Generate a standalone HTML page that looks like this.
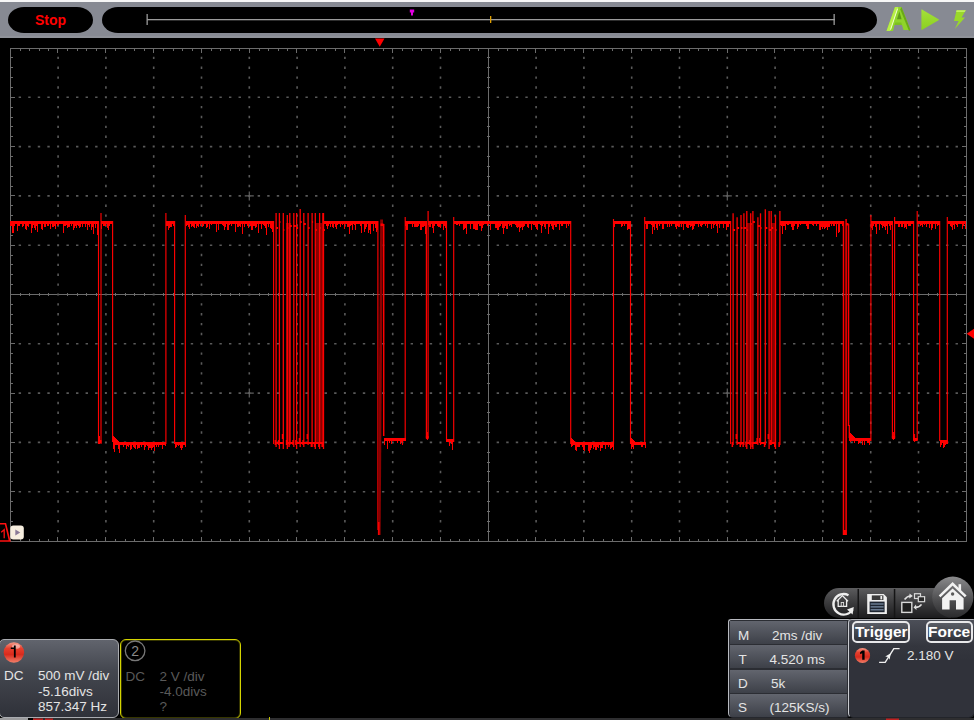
<!DOCTYPE html>
<html><head><meta charset="utf-8">
<style>
html,body{margin:0;padding:0;background:#000;width:974px;height:720px;overflow:hidden;font-family:"Liberation Sans",sans-serif;}
.abs{position:absolute;}
#topwhite{left:0;top:0;width:974px;height:2px;background:#f7f7f7;}
#topbar{left:0;top:2px;width:974px;height:36px;background:#878a93;border-bottom:0;box-shadow:inset 0 -2px 0 #8f9299;}
#stop{left:8px;top:7px;width:85px;height:26px;background:#000;border-radius:16px/13px;}
#stoptxt{left:35px;top:11px;font-weight:bold;font-size:14px;color:#ff0000;line-height:18px;}
#tpill{left:102px;top:7px;width:775px;height:26px;background:#000;border-radius:16px/13px;}
svg{position:absolute;left:0;top:0;}
.p1{left:-1px;top:639px;width:118px;height:77px;border:1px solid #a9abb0;border-radius:5px 6px 6px 5px;
 background:linear-gradient(#61646d 0%,#44474f 40%,#2f3139 100%);}
.p2{left:120px;top:639px;width:119px;height:78px;border:1px solid #d4d400;border-radius:6px;background:#000;box-shadow:inset 0 0 0 1px rgba(120,120,0,0.45);}
.t{position:absolute;font-size:13.5px;line-height:15px;white-space:nowrap;}
.w{color:#e4e4e4;}
.gr{color:#5a5a5a;}
.tb{left:728px;top:619px;width:121px;height:97px;border:1px solid #b8bac0;border-bottom:1px solid #26282e;border-right:1px solid #1e2026;border-radius:3px 3px 5px 5px;background:#2b2d33;}
.row{position:absolute;left:1px;width:117px;height:23px;background:linear-gradient(#62656e,#3d4048);}
.trig{left:848px;top:619px;width:125px;height:97px;border-left:1px solid #c9cbd0;border-top:1px solid #b0b2b8;border-right:1px solid #22242a;border-bottom:1px solid #22242a;border-radius:4px 2px 6px 5px;background:linear-gradient(#4c4f58 0px,#34363e 26px,#30323a 40px);}
.btn{position:absolute;top:1px;height:18px;border:2px solid #e8e8ea;border-radius:5px;background:linear-gradient(#5a5d66,#2e3038);}
.btxt{position:absolute;font-weight:bold;font-size:15.5px;color:#ffffff;line-height:17px;}
#toolpill{left:824px;top:588px;width:130px;height:30px;border-radius:15px;background:linear-gradient(#5a5c60,#2a2b2e);}
#home{left:932px;top:576px;width:42px;height:42px;border-radius:21px;background:radial-gradient(circle at 50% 35%,#6e6f73,#3a3b3e 75%);}
</style></head><body>
<div id="topwhite" class="abs"></div>
<div id="topbar" class="abs"></div>
<div id="stop" class="abs"></div>
<div id="stoptxt" class="abs">Stop</div>
<div id="tpill" class="abs"></div>

<svg width="974" height="720" viewBox="0 0 974 720" shape-rendering="crispEdges">
<rect x="10" y="48" width="957" height="1" fill="#6c6c6c"/>
<rect x="10" y="541" width="957" height="1" fill="#6c6c6c"/>
<rect x="10" y="48" width="1" height="494" fill="#6c6c6c"/>
<rect x="966" y="48" width="1" height="494" fill="#6c6c6c"/>
<rect x="10" y="294" width="957" height="1" fill="#6c6c6c"/>
<rect x="488" y="48" width="1" height="494" fill="#6c6c6c"/>
<rect x="20" y="49" width="1" height="2" fill="#6c6c6c"/>
<rect x="20" y="539" width="1" height="2" fill="#6c6c6c"/>
<rect x="20" y="293" width="1" height="3" fill="#6c6c6c"/>
<rect x="29" y="49" width="1" height="2" fill="#6c6c6c"/>
<rect x="29" y="539" width="1" height="2" fill="#6c6c6c"/>
<rect x="29" y="293" width="1" height="3" fill="#6c6c6c"/>
<rect x="39" y="49" width="1" height="2" fill="#6c6c6c"/>
<rect x="39" y="539" width="1" height="2" fill="#6c6c6c"/>
<rect x="39" y="293" width="1" height="3" fill="#6c6c6c"/>
<rect x="48" y="49" width="1" height="2" fill="#6c6c6c"/>
<rect x="48" y="539" width="1" height="2" fill="#6c6c6c"/>
<rect x="48" y="293" width="1" height="3" fill="#6c6c6c"/>
<rect x="67" y="49" width="1" height="2" fill="#6c6c6c"/>
<rect x="67" y="539" width="1" height="2" fill="#6c6c6c"/>
<rect x="67" y="293" width="1" height="3" fill="#6c6c6c"/>
<rect x="77" y="49" width="1" height="2" fill="#6c6c6c"/>
<rect x="77" y="539" width="1" height="2" fill="#6c6c6c"/>
<rect x="77" y="293" width="1" height="3" fill="#6c6c6c"/>
<rect x="86" y="49" width="1" height="2" fill="#6c6c6c"/>
<rect x="86" y="539" width="1" height="2" fill="#6c6c6c"/>
<rect x="86" y="293" width="1" height="3" fill="#6c6c6c"/>
<rect x="96" y="49" width="1" height="2" fill="#6c6c6c"/>
<rect x="96" y="539" width="1" height="2" fill="#6c6c6c"/>
<rect x="96" y="293" width="1" height="3" fill="#6c6c6c"/>
<rect x="115" y="49" width="1" height="2" fill="#6c6c6c"/>
<rect x="115" y="539" width="1" height="2" fill="#6c6c6c"/>
<rect x="115" y="293" width="1" height="3" fill="#6c6c6c"/>
<rect x="125" y="49" width="1" height="2" fill="#6c6c6c"/>
<rect x="125" y="539" width="1" height="2" fill="#6c6c6c"/>
<rect x="125" y="293" width="1" height="3" fill="#6c6c6c"/>
<rect x="134" y="49" width="1" height="2" fill="#6c6c6c"/>
<rect x="134" y="539" width="1" height="2" fill="#6c6c6c"/>
<rect x="134" y="293" width="1" height="3" fill="#6c6c6c"/>
<rect x="144" y="49" width="1" height="2" fill="#6c6c6c"/>
<rect x="144" y="539" width="1" height="2" fill="#6c6c6c"/>
<rect x="144" y="293" width="1" height="3" fill="#6c6c6c"/>
<rect x="163" y="49" width="1" height="2" fill="#6c6c6c"/>
<rect x="163" y="539" width="1" height="2" fill="#6c6c6c"/>
<rect x="163" y="293" width="1" height="3" fill="#6c6c6c"/>
<rect x="173" y="49" width="1" height="2" fill="#6c6c6c"/>
<rect x="173" y="539" width="1" height="2" fill="#6c6c6c"/>
<rect x="173" y="293" width="1" height="3" fill="#6c6c6c"/>
<rect x="182" y="49" width="1" height="2" fill="#6c6c6c"/>
<rect x="182" y="539" width="1" height="2" fill="#6c6c6c"/>
<rect x="182" y="293" width="1" height="3" fill="#6c6c6c"/>
<rect x="192" y="49" width="1" height="2" fill="#6c6c6c"/>
<rect x="192" y="539" width="1" height="2" fill="#6c6c6c"/>
<rect x="192" y="293" width="1" height="3" fill="#6c6c6c"/>
<rect x="211" y="49" width="1" height="2" fill="#6c6c6c"/>
<rect x="211" y="539" width="1" height="2" fill="#6c6c6c"/>
<rect x="211" y="293" width="1" height="3" fill="#6c6c6c"/>
<rect x="220" y="49" width="1" height="2" fill="#6c6c6c"/>
<rect x="220" y="539" width="1" height="2" fill="#6c6c6c"/>
<rect x="220" y="293" width="1" height="3" fill="#6c6c6c"/>
<rect x="230" y="49" width="1" height="2" fill="#6c6c6c"/>
<rect x="230" y="539" width="1" height="2" fill="#6c6c6c"/>
<rect x="230" y="293" width="1" height="3" fill="#6c6c6c"/>
<rect x="239" y="49" width="1" height="2" fill="#6c6c6c"/>
<rect x="239" y="539" width="1" height="2" fill="#6c6c6c"/>
<rect x="239" y="293" width="1" height="3" fill="#6c6c6c"/>
<rect x="259" y="49" width="1" height="2" fill="#6c6c6c"/>
<rect x="259" y="539" width="1" height="2" fill="#6c6c6c"/>
<rect x="259" y="293" width="1" height="3" fill="#6c6c6c"/>
<rect x="268" y="49" width="1" height="2" fill="#6c6c6c"/>
<rect x="268" y="539" width="1" height="2" fill="#6c6c6c"/>
<rect x="268" y="293" width="1" height="3" fill="#6c6c6c"/>
<rect x="278" y="49" width="1" height="2" fill="#6c6c6c"/>
<rect x="278" y="539" width="1" height="2" fill="#6c6c6c"/>
<rect x="278" y="293" width="1" height="3" fill="#6c6c6c"/>
<rect x="287" y="49" width="1" height="2" fill="#6c6c6c"/>
<rect x="287" y="539" width="1" height="2" fill="#6c6c6c"/>
<rect x="287" y="293" width="1" height="3" fill="#6c6c6c"/>
<rect x="306" y="49" width="1" height="2" fill="#6c6c6c"/>
<rect x="306" y="539" width="1" height="2" fill="#6c6c6c"/>
<rect x="306" y="293" width="1" height="3" fill="#6c6c6c"/>
<rect x="316" y="49" width="1" height="2" fill="#6c6c6c"/>
<rect x="316" y="539" width="1" height="2" fill="#6c6c6c"/>
<rect x="316" y="293" width="1" height="3" fill="#6c6c6c"/>
<rect x="325" y="49" width="1" height="2" fill="#6c6c6c"/>
<rect x="325" y="539" width="1" height="2" fill="#6c6c6c"/>
<rect x="325" y="293" width="1" height="3" fill="#6c6c6c"/>
<rect x="335" y="49" width="1" height="2" fill="#6c6c6c"/>
<rect x="335" y="539" width="1" height="2" fill="#6c6c6c"/>
<rect x="335" y="293" width="1" height="3" fill="#6c6c6c"/>
<rect x="354" y="49" width="1" height="2" fill="#6c6c6c"/>
<rect x="354" y="539" width="1" height="2" fill="#6c6c6c"/>
<rect x="354" y="293" width="1" height="3" fill="#6c6c6c"/>
<rect x="364" y="49" width="1" height="2" fill="#6c6c6c"/>
<rect x="364" y="539" width="1" height="2" fill="#6c6c6c"/>
<rect x="364" y="293" width="1" height="3" fill="#6c6c6c"/>
<rect x="373" y="49" width="1" height="2" fill="#6c6c6c"/>
<rect x="373" y="539" width="1" height="2" fill="#6c6c6c"/>
<rect x="373" y="293" width="1" height="3" fill="#6c6c6c"/>
<rect x="383" y="49" width="1" height="2" fill="#6c6c6c"/>
<rect x="383" y="539" width="1" height="2" fill="#6c6c6c"/>
<rect x="383" y="293" width="1" height="3" fill="#6c6c6c"/>
<rect x="402" y="49" width="1" height="2" fill="#6c6c6c"/>
<rect x="402" y="539" width="1" height="2" fill="#6c6c6c"/>
<rect x="402" y="293" width="1" height="3" fill="#6c6c6c"/>
<rect x="412" y="49" width="1" height="2" fill="#6c6c6c"/>
<rect x="412" y="539" width="1" height="2" fill="#6c6c6c"/>
<rect x="412" y="293" width="1" height="3" fill="#6c6c6c"/>
<rect x="421" y="49" width="1" height="2" fill="#6c6c6c"/>
<rect x="421" y="539" width="1" height="2" fill="#6c6c6c"/>
<rect x="421" y="293" width="1" height="3" fill="#6c6c6c"/>
<rect x="431" y="49" width="1" height="2" fill="#6c6c6c"/>
<rect x="431" y="539" width="1" height="2" fill="#6c6c6c"/>
<rect x="431" y="293" width="1" height="3" fill="#6c6c6c"/>
<rect x="450" y="49" width="1" height="2" fill="#6c6c6c"/>
<rect x="450" y="539" width="1" height="2" fill="#6c6c6c"/>
<rect x="450" y="293" width="1" height="3" fill="#6c6c6c"/>
<rect x="459" y="49" width="1" height="2" fill="#6c6c6c"/>
<rect x="459" y="539" width="1" height="2" fill="#6c6c6c"/>
<rect x="459" y="293" width="1" height="3" fill="#6c6c6c"/>
<rect x="469" y="49" width="1" height="2" fill="#6c6c6c"/>
<rect x="469" y="539" width="1" height="2" fill="#6c6c6c"/>
<rect x="469" y="293" width="1" height="3" fill="#6c6c6c"/>
<rect x="478" y="49" width="1" height="2" fill="#6c6c6c"/>
<rect x="478" y="539" width="1" height="2" fill="#6c6c6c"/>
<rect x="478" y="293" width="1" height="3" fill="#6c6c6c"/>
<rect x="498" y="49" width="1" height="2" fill="#6c6c6c"/>
<rect x="498" y="539" width="1" height="2" fill="#6c6c6c"/>
<rect x="498" y="293" width="1" height="3" fill="#6c6c6c"/>
<rect x="507" y="49" width="1" height="2" fill="#6c6c6c"/>
<rect x="507" y="539" width="1" height="2" fill="#6c6c6c"/>
<rect x="507" y="293" width="1" height="3" fill="#6c6c6c"/>
<rect x="517" y="49" width="1" height="2" fill="#6c6c6c"/>
<rect x="517" y="539" width="1" height="2" fill="#6c6c6c"/>
<rect x="517" y="293" width="1" height="3" fill="#6c6c6c"/>
<rect x="526" y="49" width="1" height="2" fill="#6c6c6c"/>
<rect x="526" y="539" width="1" height="2" fill="#6c6c6c"/>
<rect x="526" y="293" width="1" height="3" fill="#6c6c6c"/>
<rect x="545" y="49" width="1" height="2" fill="#6c6c6c"/>
<rect x="545" y="539" width="1" height="2" fill="#6c6c6c"/>
<rect x="545" y="293" width="1" height="3" fill="#6c6c6c"/>
<rect x="555" y="49" width="1" height="2" fill="#6c6c6c"/>
<rect x="555" y="539" width="1" height="2" fill="#6c6c6c"/>
<rect x="555" y="293" width="1" height="3" fill="#6c6c6c"/>
<rect x="564" y="49" width="1" height="2" fill="#6c6c6c"/>
<rect x="564" y="539" width="1" height="2" fill="#6c6c6c"/>
<rect x="564" y="293" width="1" height="3" fill="#6c6c6c"/>
<rect x="574" y="49" width="1" height="2" fill="#6c6c6c"/>
<rect x="574" y="539" width="1" height="2" fill="#6c6c6c"/>
<rect x="574" y="293" width="1" height="3" fill="#6c6c6c"/>
<rect x="593" y="49" width="1" height="2" fill="#6c6c6c"/>
<rect x="593" y="539" width="1" height="2" fill="#6c6c6c"/>
<rect x="593" y="293" width="1" height="3" fill="#6c6c6c"/>
<rect x="603" y="49" width="1" height="2" fill="#6c6c6c"/>
<rect x="603" y="539" width="1" height="2" fill="#6c6c6c"/>
<rect x="603" y="293" width="1" height="3" fill="#6c6c6c"/>
<rect x="612" y="49" width="1" height="2" fill="#6c6c6c"/>
<rect x="612" y="539" width="1" height="2" fill="#6c6c6c"/>
<rect x="612" y="293" width="1" height="3" fill="#6c6c6c"/>
<rect x="622" y="49" width="1" height="2" fill="#6c6c6c"/>
<rect x="622" y="539" width="1" height="2" fill="#6c6c6c"/>
<rect x="622" y="293" width="1" height="3" fill="#6c6c6c"/>
<rect x="641" y="49" width="1" height="2" fill="#6c6c6c"/>
<rect x="641" y="539" width="1" height="2" fill="#6c6c6c"/>
<rect x="641" y="293" width="1" height="3" fill="#6c6c6c"/>
<rect x="651" y="49" width="1" height="2" fill="#6c6c6c"/>
<rect x="651" y="539" width="1" height="2" fill="#6c6c6c"/>
<rect x="651" y="293" width="1" height="3" fill="#6c6c6c"/>
<rect x="660" y="49" width="1" height="2" fill="#6c6c6c"/>
<rect x="660" y="539" width="1" height="2" fill="#6c6c6c"/>
<rect x="660" y="293" width="1" height="3" fill="#6c6c6c"/>
<rect x="670" y="49" width="1" height="2" fill="#6c6c6c"/>
<rect x="670" y="539" width="1" height="2" fill="#6c6c6c"/>
<rect x="670" y="293" width="1" height="3" fill="#6c6c6c"/>
<rect x="689" y="49" width="1" height="2" fill="#6c6c6c"/>
<rect x="689" y="539" width="1" height="2" fill="#6c6c6c"/>
<rect x="689" y="293" width="1" height="3" fill="#6c6c6c"/>
<rect x="698" y="49" width="1" height="2" fill="#6c6c6c"/>
<rect x="698" y="539" width="1" height="2" fill="#6c6c6c"/>
<rect x="698" y="293" width="1" height="3" fill="#6c6c6c"/>
<rect x="708" y="49" width="1" height="2" fill="#6c6c6c"/>
<rect x="708" y="539" width="1" height="2" fill="#6c6c6c"/>
<rect x="708" y="293" width="1" height="3" fill="#6c6c6c"/>
<rect x="717" y="49" width="1" height="2" fill="#6c6c6c"/>
<rect x="717" y="539" width="1" height="2" fill="#6c6c6c"/>
<rect x="717" y="293" width="1" height="3" fill="#6c6c6c"/>
<rect x="737" y="49" width="1" height="2" fill="#6c6c6c"/>
<rect x="737" y="539" width="1" height="2" fill="#6c6c6c"/>
<rect x="737" y="293" width="1" height="3" fill="#6c6c6c"/>
<rect x="746" y="49" width="1" height="2" fill="#6c6c6c"/>
<rect x="746" y="539" width="1" height="2" fill="#6c6c6c"/>
<rect x="746" y="293" width="1" height="3" fill="#6c6c6c"/>
<rect x="756" y="49" width="1" height="2" fill="#6c6c6c"/>
<rect x="756" y="539" width="1" height="2" fill="#6c6c6c"/>
<rect x="756" y="293" width="1" height="3" fill="#6c6c6c"/>
<rect x="765" y="49" width="1" height="2" fill="#6c6c6c"/>
<rect x="765" y="539" width="1" height="2" fill="#6c6c6c"/>
<rect x="765" y="293" width="1" height="3" fill="#6c6c6c"/>
<rect x="784" y="49" width="1" height="2" fill="#6c6c6c"/>
<rect x="784" y="539" width="1" height="2" fill="#6c6c6c"/>
<rect x="784" y="293" width="1" height="3" fill="#6c6c6c"/>
<rect x="794" y="49" width="1" height="2" fill="#6c6c6c"/>
<rect x="794" y="539" width="1" height="2" fill="#6c6c6c"/>
<rect x="794" y="293" width="1" height="3" fill="#6c6c6c"/>
<rect x="803" y="49" width="1" height="2" fill="#6c6c6c"/>
<rect x="803" y="539" width="1" height="2" fill="#6c6c6c"/>
<rect x="803" y="293" width="1" height="3" fill="#6c6c6c"/>
<rect x="813" y="49" width="1" height="2" fill="#6c6c6c"/>
<rect x="813" y="539" width="1" height="2" fill="#6c6c6c"/>
<rect x="813" y="293" width="1" height="3" fill="#6c6c6c"/>
<rect x="832" y="49" width="1" height="2" fill="#6c6c6c"/>
<rect x="832" y="539" width="1" height="2" fill="#6c6c6c"/>
<rect x="832" y="293" width="1" height="3" fill="#6c6c6c"/>
<rect x="842" y="49" width="1" height="2" fill="#6c6c6c"/>
<rect x="842" y="539" width="1" height="2" fill="#6c6c6c"/>
<rect x="842" y="293" width="1" height="3" fill="#6c6c6c"/>
<rect x="851" y="49" width="1" height="2" fill="#6c6c6c"/>
<rect x="851" y="539" width="1" height="2" fill="#6c6c6c"/>
<rect x="851" y="293" width="1" height="3" fill="#6c6c6c"/>
<rect x="861" y="49" width="1" height="2" fill="#6c6c6c"/>
<rect x="861" y="539" width="1" height="2" fill="#6c6c6c"/>
<rect x="861" y="293" width="1" height="3" fill="#6c6c6c"/>
<rect x="880" y="49" width="1" height="2" fill="#6c6c6c"/>
<rect x="880" y="539" width="1" height="2" fill="#6c6c6c"/>
<rect x="880" y="293" width="1" height="3" fill="#6c6c6c"/>
<rect x="890" y="49" width="1" height="2" fill="#6c6c6c"/>
<rect x="890" y="539" width="1" height="2" fill="#6c6c6c"/>
<rect x="890" y="293" width="1" height="3" fill="#6c6c6c"/>
<rect x="899" y="49" width="1" height="2" fill="#6c6c6c"/>
<rect x="899" y="539" width="1" height="2" fill="#6c6c6c"/>
<rect x="899" y="293" width="1" height="3" fill="#6c6c6c"/>
<rect x="909" y="49" width="1" height="2" fill="#6c6c6c"/>
<rect x="909" y="539" width="1" height="2" fill="#6c6c6c"/>
<rect x="909" y="293" width="1" height="3" fill="#6c6c6c"/>
<rect x="928" y="49" width="1" height="2" fill="#6c6c6c"/>
<rect x="928" y="539" width="1" height="2" fill="#6c6c6c"/>
<rect x="928" y="293" width="1" height="3" fill="#6c6c6c"/>
<rect x="937" y="49" width="1" height="2" fill="#6c6c6c"/>
<rect x="937" y="539" width="1" height="2" fill="#6c6c6c"/>
<rect x="937" y="293" width="1" height="3" fill="#6c6c6c"/>
<rect x="947" y="49" width="1" height="2" fill="#6c6c6c"/>
<rect x="947" y="539" width="1" height="2" fill="#6c6c6c"/>
<rect x="947" y="293" width="1" height="3" fill="#6c6c6c"/>
<rect x="956" y="49" width="1" height="2" fill="#6c6c6c"/>
<rect x="956" y="539" width="1" height="2" fill="#6c6c6c"/>
<rect x="956" y="293" width="1" height="3" fill="#6c6c6c"/>
<rect x="11" y="57" width="2" height="1" fill="#6c6c6c"/>
<rect x="964" y="57" width="2" height="1" fill="#6c6c6c"/>
<rect x="487" y="57" width="3" height="1" fill="#6c6c6c"/>
<rect x="11" y="67" width="2" height="1" fill="#6c6c6c"/>
<rect x="964" y="67" width="2" height="1" fill="#6c6c6c"/>
<rect x="487" y="67" width="3" height="1" fill="#6c6c6c"/>
<rect x="11" y="77" width="2" height="1" fill="#6c6c6c"/>
<rect x="964" y="77" width="2" height="1" fill="#6c6c6c"/>
<rect x="487" y="77" width="3" height="1" fill="#6c6c6c"/>
<rect x="11" y="87" width="2" height="1" fill="#6c6c6c"/>
<rect x="964" y="87" width="2" height="1" fill="#6c6c6c"/>
<rect x="487" y="87" width="3" height="1" fill="#6c6c6c"/>
<rect x="11" y="107" width="2" height="1" fill="#6c6c6c"/>
<rect x="964" y="107" width="2" height="1" fill="#6c6c6c"/>
<rect x="487" y="107" width="3" height="1" fill="#6c6c6c"/>
<rect x="11" y="117" width="2" height="1" fill="#6c6c6c"/>
<rect x="964" y="117" width="2" height="1" fill="#6c6c6c"/>
<rect x="487" y="117" width="3" height="1" fill="#6c6c6c"/>
<rect x="11" y="126" width="2" height="1" fill="#6c6c6c"/>
<rect x="964" y="126" width="2" height="1" fill="#6c6c6c"/>
<rect x="487" y="126" width="3" height="1" fill="#6c6c6c"/>
<rect x="11" y="136" width="2" height="1" fill="#6c6c6c"/>
<rect x="964" y="136" width="2" height="1" fill="#6c6c6c"/>
<rect x="487" y="136" width="3" height="1" fill="#6c6c6c"/>
<rect x="11" y="156" width="2" height="1" fill="#6c6c6c"/>
<rect x="964" y="156" width="2" height="1" fill="#6c6c6c"/>
<rect x="487" y="156" width="3" height="1" fill="#6c6c6c"/>
<rect x="11" y="166" width="2" height="1" fill="#6c6c6c"/>
<rect x="964" y="166" width="2" height="1" fill="#6c6c6c"/>
<rect x="487" y="166" width="3" height="1" fill="#6c6c6c"/>
<rect x="11" y="176" width="2" height="1" fill="#6c6c6c"/>
<rect x="964" y="176" width="2" height="1" fill="#6c6c6c"/>
<rect x="487" y="176" width="3" height="1" fill="#6c6c6c"/>
<rect x="11" y="186" width="2" height="1" fill="#6c6c6c"/>
<rect x="964" y="186" width="2" height="1" fill="#6c6c6c"/>
<rect x="487" y="186" width="3" height="1" fill="#6c6c6c"/>
<rect x="11" y="205" width="2" height="1" fill="#6c6c6c"/>
<rect x="964" y="205" width="2" height="1" fill="#6c6c6c"/>
<rect x="487" y="205" width="3" height="1" fill="#6c6c6c"/>
<rect x="11" y="215" width="2" height="1" fill="#6c6c6c"/>
<rect x="964" y="215" width="2" height="1" fill="#6c6c6c"/>
<rect x="487" y="215" width="3" height="1" fill="#6c6c6c"/>
<rect x="11" y="225" width="2" height="1" fill="#6c6c6c"/>
<rect x="964" y="225" width="2" height="1" fill="#6c6c6c"/>
<rect x="487" y="225" width="3" height="1" fill="#6c6c6c"/>
<rect x="11" y="235" width="2" height="1" fill="#6c6c6c"/>
<rect x="964" y="235" width="2" height="1" fill="#6c6c6c"/>
<rect x="487" y="235" width="3" height="1" fill="#6c6c6c"/>
<rect x="11" y="255" width="2" height="1" fill="#6c6c6c"/>
<rect x="964" y="255" width="2" height="1" fill="#6c6c6c"/>
<rect x="487" y="255" width="3" height="1" fill="#6c6c6c"/>
<rect x="11" y="264" width="2" height="1" fill="#6c6c6c"/>
<rect x="964" y="264" width="2" height="1" fill="#6c6c6c"/>
<rect x="487" y="264" width="3" height="1" fill="#6c6c6c"/>
<rect x="11" y="274" width="2" height="1" fill="#6c6c6c"/>
<rect x="964" y="274" width="2" height="1" fill="#6c6c6c"/>
<rect x="487" y="274" width="3" height="1" fill="#6c6c6c"/>
<rect x="11" y="284" width="2" height="1" fill="#6c6c6c"/>
<rect x="964" y="284" width="2" height="1" fill="#6c6c6c"/>
<rect x="487" y="284" width="3" height="1" fill="#6c6c6c"/>
<rect x="11" y="304" width="2" height="1" fill="#6c6c6c"/>
<rect x="964" y="304" width="2" height="1" fill="#6c6c6c"/>
<rect x="487" y="304" width="3" height="1" fill="#6c6c6c"/>
<rect x="11" y="314" width="2" height="1" fill="#6c6c6c"/>
<rect x="964" y="314" width="2" height="1" fill="#6c6c6c"/>
<rect x="487" y="314" width="3" height="1" fill="#6c6c6c"/>
<rect x="11" y="324" width="2" height="1" fill="#6c6c6c"/>
<rect x="964" y="324" width="2" height="1" fill="#6c6c6c"/>
<rect x="487" y="324" width="3" height="1" fill="#6c6c6c"/>
<rect x="11" y="333" width="2" height="1" fill="#6c6c6c"/>
<rect x="964" y="333" width="2" height="1" fill="#6c6c6c"/>
<rect x="487" y="333" width="3" height="1" fill="#6c6c6c"/>
<rect x="11" y="353" width="2" height="1" fill="#6c6c6c"/>
<rect x="964" y="353" width="2" height="1" fill="#6c6c6c"/>
<rect x="487" y="353" width="3" height="1" fill="#6c6c6c"/>
<rect x="11" y="363" width="2" height="1" fill="#6c6c6c"/>
<rect x="964" y="363" width="2" height="1" fill="#6c6c6c"/>
<rect x="487" y="363" width="3" height="1" fill="#6c6c6c"/>
<rect x="11" y="373" width="2" height="1" fill="#6c6c6c"/>
<rect x="964" y="373" width="2" height="1" fill="#6c6c6c"/>
<rect x="487" y="373" width="3" height="1" fill="#6c6c6c"/>
<rect x="11" y="383" width="2" height="1" fill="#6c6c6c"/>
<rect x="964" y="383" width="2" height="1" fill="#6c6c6c"/>
<rect x="487" y="383" width="3" height="1" fill="#6c6c6c"/>
<rect x="11" y="402" width="2" height="1" fill="#6c6c6c"/>
<rect x="964" y="402" width="2" height="1" fill="#6c6c6c"/>
<rect x="487" y="402" width="3" height="1" fill="#6c6c6c"/>
<rect x="11" y="412" width="2" height="1" fill="#6c6c6c"/>
<rect x="964" y="412" width="2" height="1" fill="#6c6c6c"/>
<rect x="487" y="412" width="3" height="1" fill="#6c6c6c"/>
<rect x="11" y="422" width="2" height="1" fill="#6c6c6c"/>
<rect x="964" y="422" width="2" height="1" fill="#6c6c6c"/>
<rect x="487" y="422" width="3" height="1" fill="#6c6c6c"/>
<rect x="11" y="432" width="2" height="1" fill="#6c6c6c"/>
<rect x="964" y="432" width="2" height="1" fill="#6c6c6c"/>
<rect x="487" y="432" width="3" height="1" fill="#6c6c6c"/>
<rect x="11" y="452" width="2" height="1" fill="#6c6c6c"/>
<rect x="964" y="452" width="2" height="1" fill="#6c6c6c"/>
<rect x="487" y="452" width="3" height="1" fill="#6c6c6c"/>
<rect x="11" y="462" width="2" height="1" fill="#6c6c6c"/>
<rect x="964" y="462" width="2" height="1" fill="#6c6c6c"/>
<rect x="487" y="462" width="3" height="1" fill="#6c6c6c"/>
<rect x="11" y="471" width="2" height="1" fill="#6c6c6c"/>
<rect x="964" y="471" width="2" height="1" fill="#6c6c6c"/>
<rect x="487" y="471" width="3" height="1" fill="#6c6c6c"/>
<rect x="11" y="481" width="2" height="1" fill="#6c6c6c"/>
<rect x="964" y="481" width="2" height="1" fill="#6c6c6c"/>
<rect x="487" y="481" width="3" height="1" fill="#6c6c6c"/>
<rect x="11" y="501" width="2" height="1" fill="#6c6c6c"/>
<rect x="964" y="501" width="2" height="1" fill="#6c6c6c"/>
<rect x="487" y="501" width="3" height="1" fill="#6c6c6c"/>
<rect x="11" y="511" width="2" height="1" fill="#6c6c6c"/>
<rect x="964" y="511" width="2" height="1" fill="#6c6c6c"/>
<rect x="487" y="511" width="3" height="1" fill="#6c6c6c"/>
<rect x="11" y="521" width="2" height="1" fill="#6c6c6c"/>
<rect x="964" y="521" width="2" height="1" fill="#6c6c6c"/>
<rect x="487" y="521" width="3" height="1" fill="#6c6c6c"/>
<rect x="11" y="531" width="2" height="1" fill="#6c6c6c"/>
<rect x="964" y="531" width="2" height="1" fill="#6c6c6c"/>
<rect x="487" y="531" width="3" height="1" fill="#6c6c6c"/>
<rect x="57" y="49" width="1" height="4" fill="#6c6c6c"/>
<rect x="57" y="537" width="1" height="4" fill="#6c6c6c"/>
<rect x="105" y="49" width="1" height="4" fill="#6c6c6c"/>
<rect x="105" y="537" width="1" height="4" fill="#6c6c6c"/>
<rect x="153" y="49" width="1" height="4" fill="#6c6c6c"/>
<rect x="153" y="537" width="1" height="4" fill="#6c6c6c"/>
<rect x="201" y="49" width="1" height="4" fill="#6c6c6c"/>
<rect x="201" y="537" width="1" height="4" fill="#6c6c6c"/>
<rect x="249" y="49" width="1" height="4" fill="#6c6c6c"/>
<rect x="249" y="537" width="1" height="4" fill="#6c6c6c"/>
<rect x="296" y="49" width="1" height="4" fill="#6c6c6c"/>
<rect x="296" y="537" width="1" height="4" fill="#6c6c6c"/>
<rect x="344" y="49" width="1" height="4" fill="#6c6c6c"/>
<rect x="344" y="537" width="1" height="4" fill="#6c6c6c"/>
<rect x="392" y="49" width="1" height="4" fill="#6c6c6c"/>
<rect x="392" y="537" width="1" height="4" fill="#6c6c6c"/>
<rect x="440" y="49" width="1" height="4" fill="#6c6c6c"/>
<rect x="440" y="537" width="1" height="4" fill="#6c6c6c"/>
<rect x="488" y="49" width="1" height="4" fill="#6c6c6c"/>
<rect x="488" y="537" width="1" height="4" fill="#6c6c6c"/>
<rect x="535" y="49" width="1" height="4" fill="#6c6c6c"/>
<rect x="535" y="537" width="1" height="4" fill="#6c6c6c"/>
<rect x="583" y="49" width="1" height="4" fill="#6c6c6c"/>
<rect x="583" y="537" width="1" height="4" fill="#6c6c6c"/>
<rect x="631" y="49" width="1" height="4" fill="#6c6c6c"/>
<rect x="631" y="537" width="1" height="4" fill="#6c6c6c"/>
<rect x="679" y="49" width="1" height="4" fill="#6c6c6c"/>
<rect x="679" y="537" width="1" height="4" fill="#6c6c6c"/>
<rect x="727" y="49" width="1" height="4" fill="#6c6c6c"/>
<rect x="727" y="537" width="1" height="4" fill="#6c6c6c"/>
<rect x="774" y="49" width="1" height="4" fill="#6c6c6c"/>
<rect x="774" y="537" width="1" height="4" fill="#6c6c6c"/>
<rect x="822" y="49" width="1" height="4" fill="#6c6c6c"/>
<rect x="822" y="537" width="1" height="4" fill="#6c6c6c"/>
<rect x="870" y="49" width="1" height="4" fill="#6c6c6c"/>
<rect x="870" y="537" width="1" height="4" fill="#6c6c6c"/>
<rect x="918" y="49" width="1" height="4" fill="#6c6c6c"/>
<rect x="918" y="537" width="1" height="4" fill="#6c6c6c"/>
<rect x="11" y="97" width="4" height="1" fill="#6c6c6c"/>
<rect x="962" y="97" width="4" height="1" fill="#6c6c6c"/>
<rect x="11" y="146" width="4" height="1" fill="#6c6c6c"/>
<rect x="962" y="146" width="4" height="1" fill="#6c6c6c"/>
<rect x="11" y="195" width="4" height="1" fill="#6c6c6c"/>
<rect x="962" y="195" width="4" height="1" fill="#6c6c6c"/>
<rect x="11" y="245" width="4" height="1" fill="#6c6c6c"/>
<rect x="962" y="245" width="4" height="1" fill="#6c6c6c"/>
<rect x="11" y="294" width="4" height="1" fill="#6c6c6c"/>
<rect x="962" y="294" width="4" height="1" fill="#6c6c6c"/>
<rect x="11" y="343" width="4" height="1" fill="#6c6c6c"/>
<rect x="962" y="343" width="4" height="1" fill="#6c6c6c"/>
<rect x="11" y="393" width="4" height="1" fill="#6c6c6c"/>
<rect x="962" y="393" width="4" height="1" fill="#6c6c6c"/>
<rect x="11" y="442" width="4" height="1" fill="#6c6c6c"/>
<rect x="962" y="442" width="4" height="1" fill="#6c6c6c"/>
<rect x="11" y="491" width="4" height="1" fill="#6c6c6c"/>
<rect x="962" y="491" width="4" height="1" fill="#6c6c6c"/>
</svg>
<svg width="974" height="720" viewBox="0 0 974 720">
<path fill="#5a5a5a" d="M57.30 56.66h1.6v2.4h-1.6zM57.30 66.52h1.6v2.4h-1.6zM57.30 76.38h1.6v2.4h-1.6zM57.30 86.24h1.6v2.4h-1.6zM57.10 96.30h2v2h-2zM57.30 105.96h1.6v2.4h-1.6zM57.30 115.82h1.6v2.4h-1.6zM57.30 125.68h1.6v2.4h-1.6zM57.30 135.54h1.6v2.4h-1.6zM57.10 145.60h2v2h-2zM57.30 155.26h1.6v2.4h-1.6zM57.30 165.12h1.6v2.4h-1.6zM57.30 174.98h1.6v2.4h-1.6zM57.30 184.84h1.6v2.4h-1.6zM57.10 194.90h2v2h-2zM57.30 204.56h1.6v2.4h-1.6zM57.30 214.42h1.6v2.4h-1.6zM57.30 224.28h1.6v2.4h-1.6zM57.30 234.14h1.6v2.4h-1.6zM57.10 244.20h2v2h-2zM57.30 253.86h1.6v2.4h-1.6zM57.30 263.72h1.6v2.4h-1.6zM57.30 273.58h1.6v2.4h-1.6zM57.30 283.44h1.6v2.4h-1.6zM57.10 293.50h2v2h-2zM57.30 303.16h1.6v2.4h-1.6zM57.30 313.02h1.6v2.4h-1.6zM57.30 322.88h1.6v2.4h-1.6zM57.30 332.74h1.6v2.4h-1.6zM57.10 342.80h2v2h-2zM57.30 352.46h1.6v2.4h-1.6zM57.30 362.32h1.6v2.4h-1.6zM57.30 372.18h1.6v2.4h-1.6zM57.30 382.04h1.6v2.4h-1.6zM57.10 392.10h2v2h-2zM57.30 401.76h1.6v2.4h-1.6zM57.30 411.62h1.6v2.4h-1.6zM57.30 421.48h1.6v2.4h-1.6zM57.30 431.34h1.6v2.4h-1.6zM57.10 441.40h2v2h-2zM57.30 451.06h1.6v2.4h-1.6zM57.30 460.92h1.6v2.4h-1.6zM57.30 470.78h1.6v2.4h-1.6zM57.30 480.64h1.6v2.4h-1.6zM57.10 490.70h2v2h-2zM57.30 500.36h1.6v2.4h-1.6zM57.30 510.22h1.6v2.4h-1.6zM57.30 520.08h1.6v2.4h-1.6zM57.30 529.94h1.6v2.4h-1.6zM105.10 56.66h1.6v2.4h-1.6zM105.10 66.52h1.6v2.4h-1.6zM105.10 76.38h1.6v2.4h-1.6zM105.10 86.24h1.6v2.4h-1.6zM104.90 96.30h2v2h-2zM105.10 105.96h1.6v2.4h-1.6zM105.10 115.82h1.6v2.4h-1.6zM105.10 125.68h1.6v2.4h-1.6zM105.10 135.54h1.6v2.4h-1.6zM104.90 145.60h2v2h-2zM105.10 155.26h1.6v2.4h-1.6zM105.10 165.12h1.6v2.4h-1.6zM105.10 174.98h1.6v2.4h-1.6zM105.10 184.84h1.6v2.4h-1.6zM104.90 194.90h2v2h-2zM105.10 204.56h1.6v2.4h-1.6zM105.10 214.42h1.6v2.4h-1.6zM105.10 224.28h1.6v2.4h-1.6zM105.10 234.14h1.6v2.4h-1.6zM104.90 244.20h2v2h-2zM105.10 253.86h1.6v2.4h-1.6zM105.10 263.72h1.6v2.4h-1.6zM105.10 273.58h1.6v2.4h-1.6zM105.10 283.44h1.6v2.4h-1.6zM104.90 293.50h2v2h-2zM105.10 303.16h1.6v2.4h-1.6zM105.10 313.02h1.6v2.4h-1.6zM105.10 322.88h1.6v2.4h-1.6zM105.10 332.74h1.6v2.4h-1.6zM104.90 342.80h2v2h-2zM105.10 352.46h1.6v2.4h-1.6zM105.10 362.32h1.6v2.4h-1.6zM105.10 372.18h1.6v2.4h-1.6zM105.10 382.04h1.6v2.4h-1.6zM104.90 392.10h2v2h-2zM105.10 401.76h1.6v2.4h-1.6zM105.10 411.62h1.6v2.4h-1.6zM105.10 421.48h1.6v2.4h-1.6zM105.10 431.34h1.6v2.4h-1.6zM104.90 441.40h2v2h-2zM105.10 451.06h1.6v2.4h-1.6zM105.10 460.92h1.6v2.4h-1.6zM105.10 470.78h1.6v2.4h-1.6zM105.10 480.64h1.6v2.4h-1.6zM104.90 490.70h2v2h-2zM105.10 500.36h1.6v2.4h-1.6zM105.10 510.22h1.6v2.4h-1.6zM105.10 520.08h1.6v2.4h-1.6zM105.10 529.94h1.6v2.4h-1.6zM152.90 56.66h1.6v2.4h-1.6zM152.90 66.52h1.6v2.4h-1.6zM152.90 76.38h1.6v2.4h-1.6zM152.90 86.24h1.6v2.4h-1.6zM152.70 96.30h2v2h-2zM152.90 105.96h1.6v2.4h-1.6zM152.90 115.82h1.6v2.4h-1.6zM152.90 125.68h1.6v2.4h-1.6zM152.90 135.54h1.6v2.4h-1.6zM152.70 145.60h2v2h-2zM152.90 155.26h1.6v2.4h-1.6zM152.90 165.12h1.6v2.4h-1.6zM152.90 174.98h1.6v2.4h-1.6zM152.90 184.84h1.6v2.4h-1.6zM152.70 194.90h2v2h-2zM152.90 204.56h1.6v2.4h-1.6zM152.90 214.42h1.6v2.4h-1.6zM152.90 224.28h1.6v2.4h-1.6zM152.90 234.14h1.6v2.4h-1.6zM152.70 244.20h2v2h-2zM152.90 253.86h1.6v2.4h-1.6zM152.90 263.72h1.6v2.4h-1.6zM152.90 273.58h1.6v2.4h-1.6zM152.90 283.44h1.6v2.4h-1.6zM152.70 293.50h2v2h-2zM152.90 303.16h1.6v2.4h-1.6zM152.90 313.02h1.6v2.4h-1.6zM152.90 322.88h1.6v2.4h-1.6zM152.90 332.74h1.6v2.4h-1.6zM152.70 342.80h2v2h-2zM152.90 352.46h1.6v2.4h-1.6zM152.90 362.32h1.6v2.4h-1.6zM152.90 372.18h1.6v2.4h-1.6zM152.90 382.04h1.6v2.4h-1.6zM152.70 392.10h2v2h-2zM152.90 401.76h1.6v2.4h-1.6zM152.90 411.62h1.6v2.4h-1.6zM152.90 421.48h1.6v2.4h-1.6zM152.90 431.34h1.6v2.4h-1.6zM152.70 441.40h2v2h-2zM152.90 451.06h1.6v2.4h-1.6zM152.90 460.92h1.6v2.4h-1.6zM152.90 470.78h1.6v2.4h-1.6zM152.90 480.64h1.6v2.4h-1.6zM152.70 490.70h2v2h-2zM152.90 500.36h1.6v2.4h-1.6zM152.90 510.22h1.6v2.4h-1.6zM152.90 520.08h1.6v2.4h-1.6zM152.90 529.94h1.6v2.4h-1.6zM200.70 56.66h1.6v2.4h-1.6zM200.70 66.52h1.6v2.4h-1.6zM200.70 76.38h1.6v2.4h-1.6zM200.70 86.24h1.6v2.4h-1.6zM200.50 96.30h2v2h-2zM200.70 105.96h1.6v2.4h-1.6zM200.70 115.82h1.6v2.4h-1.6zM200.70 125.68h1.6v2.4h-1.6zM200.70 135.54h1.6v2.4h-1.6zM200.50 145.60h2v2h-2zM200.70 155.26h1.6v2.4h-1.6zM200.70 165.12h1.6v2.4h-1.6zM200.70 174.98h1.6v2.4h-1.6zM200.70 184.84h1.6v2.4h-1.6zM200.50 194.90h2v2h-2zM200.70 204.56h1.6v2.4h-1.6zM200.70 214.42h1.6v2.4h-1.6zM200.70 224.28h1.6v2.4h-1.6zM200.70 234.14h1.6v2.4h-1.6zM200.50 244.20h2v2h-2zM200.70 253.86h1.6v2.4h-1.6zM200.70 263.72h1.6v2.4h-1.6zM200.70 273.58h1.6v2.4h-1.6zM200.70 283.44h1.6v2.4h-1.6zM200.50 293.50h2v2h-2zM200.70 303.16h1.6v2.4h-1.6zM200.70 313.02h1.6v2.4h-1.6zM200.70 322.88h1.6v2.4h-1.6zM200.70 332.74h1.6v2.4h-1.6zM200.50 342.80h2v2h-2zM200.70 352.46h1.6v2.4h-1.6zM200.70 362.32h1.6v2.4h-1.6zM200.70 372.18h1.6v2.4h-1.6zM200.70 382.04h1.6v2.4h-1.6zM200.50 392.10h2v2h-2zM200.70 401.76h1.6v2.4h-1.6zM200.70 411.62h1.6v2.4h-1.6zM200.70 421.48h1.6v2.4h-1.6zM200.70 431.34h1.6v2.4h-1.6zM200.50 441.40h2v2h-2zM200.70 451.06h1.6v2.4h-1.6zM200.70 460.92h1.6v2.4h-1.6zM200.70 470.78h1.6v2.4h-1.6zM200.70 480.64h1.6v2.4h-1.6zM200.50 490.70h2v2h-2zM200.70 500.36h1.6v2.4h-1.6zM200.70 510.22h1.6v2.4h-1.6zM200.70 520.08h1.6v2.4h-1.6zM200.70 529.94h1.6v2.4h-1.6zM248.50 56.66h1.6v2.4h-1.6zM248.50 66.52h1.6v2.4h-1.6zM248.50 76.38h1.6v2.4h-1.6zM248.50 86.24h1.6v2.4h-1.6zM248.30 96.30h2v2h-2zM248.50 105.96h1.6v2.4h-1.6zM248.50 115.82h1.6v2.4h-1.6zM248.50 125.68h1.6v2.4h-1.6zM248.50 135.54h1.6v2.4h-1.6zM248.30 145.60h2v2h-2zM248.50 155.26h1.6v2.4h-1.6zM248.50 165.12h1.6v2.4h-1.6zM248.50 174.98h1.6v2.4h-1.6zM248.50 184.84h1.6v2.4h-1.6zM248.30 194.90h2v2h-2zM248.50 204.56h1.6v2.4h-1.6zM248.50 214.42h1.6v2.4h-1.6zM248.50 224.28h1.6v2.4h-1.6zM248.50 234.14h1.6v2.4h-1.6zM248.30 244.20h2v2h-2zM248.50 253.86h1.6v2.4h-1.6zM248.50 263.72h1.6v2.4h-1.6zM248.50 273.58h1.6v2.4h-1.6zM248.50 283.44h1.6v2.4h-1.6zM248.30 293.50h2v2h-2zM248.50 303.16h1.6v2.4h-1.6zM248.50 313.02h1.6v2.4h-1.6zM248.50 322.88h1.6v2.4h-1.6zM248.50 332.74h1.6v2.4h-1.6zM248.30 342.80h2v2h-2zM248.50 352.46h1.6v2.4h-1.6zM248.50 362.32h1.6v2.4h-1.6zM248.50 372.18h1.6v2.4h-1.6zM248.50 382.04h1.6v2.4h-1.6zM248.30 392.10h2v2h-2zM248.50 401.76h1.6v2.4h-1.6zM248.50 411.62h1.6v2.4h-1.6zM248.50 421.48h1.6v2.4h-1.6zM248.50 431.34h1.6v2.4h-1.6zM248.30 441.40h2v2h-2zM248.50 451.06h1.6v2.4h-1.6zM248.50 460.92h1.6v2.4h-1.6zM248.50 470.78h1.6v2.4h-1.6zM248.50 480.64h1.6v2.4h-1.6zM248.30 490.70h2v2h-2zM248.50 500.36h1.6v2.4h-1.6zM248.50 510.22h1.6v2.4h-1.6zM248.50 520.08h1.6v2.4h-1.6zM248.50 529.94h1.6v2.4h-1.6zM296.30 56.66h1.6v2.4h-1.6zM296.30 66.52h1.6v2.4h-1.6zM296.30 76.38h1.6v2.4h-1.6zM296.30 86.24h1.6v2.4h-1.6zM296.10 96.30h2v2h-2zM296.30 105.96h1.6v2.4h-1.6zM296.30 115.82h1.6v2.4h-1.6zM296.30 125.68h1.6v2.4h-1.6zM296.30 135.54h1.6v2.4h-1.6zM296.10 145.60h2v2h-2zM296.30 155.26h1.6v2.4h-1.6zM296.30 165.12h1.6v2.4h-1.6zM296.30 174.98h1.6v2.4h-1.6zM296.30 184.84h1.6v2.4h-1.6zM296.10 194.90h2v2h-2zM296.30 204.56h1.6v2.4h-1.6zM296.30 214.42h1.6v2.4h-1.6zM296.30 224.28h1.6v2.4h-1.6zM296.30 234.14h1.6v2.4h-1.6zM296.10 244.20h2v2h-2zM296.30 253.86h1.6v2.4h-1.6zM296.30 263.72h1.6v2.4h-1.6zM296.30 273.58h1.6v2.4h-1.6zM296.30 283.44h1.6v2.4h-1.6zM296.10 293.50h2v2h-2zM296.30 303.16h1.6v2.4h-1.6zM296.30 313.02h1.6v2.4h-1.6zM296.30 322.88h1.6v2.4h-1.6zM296.30 332.74h1.6v2.4h-1.6zM296.10 342.80h2v2h-2zM296.30 352.46h1.6v2.4h-1.6zM296.30 362.32h1.6v2.4h-1.6zM296.30 372.18h1.6v2.4h-1.6zM296.30 382.04h1.6v2.4h-1.6zM296.10 392.10h2v2h-2zM296.30 401.76h1.6v2.4h-1.6zM296.30 411.62h1.6v2.4h-1.6zM296.30 421.48h1.6v2.4h-1.6zM296.30 431.34h1.6v2.4h-1.6zM296.10 441.40h2v2h-2zM296.30 451.06h1.6v2.4h-1.6zM296.30 460.92h1.6v2.4h-1.6zM296.30 470.78h1.6v2.4h-1.6zM296.30 480.64h1.6v2.4h-1.6zM296.10 490.70h2v2h-2zM296.30 500.36h1.6v2.4h-1.6zM296.30 510.22h1.6v2.4h-1.6zM296.30 520.08h1.6v2.4h-1.6zM296.30 529.94h1.6v2.4h-1.6zM344.10 56.66h1.6v2.4h-1.6zM344.10 66.52h1.6v2.4h-1.6zM344.10 76.38h1.6v2.4h-1.6zM344.10 86.24h1.6v2.4h-1.6zM343.90 96.30h2v2h-2zM344.10 105.96h1.6v2.4h-1.6zM344.10 115.82h1.6v2.4h-1.6zM344.10 125.68h1.6v2.4h-1.6zM344.10 135.54h1.6v2.4h-1.6zM343.90 145.60h2v2h-2zM344.10 155.26h1.6v2.4h-1.6zM344.10 165.12h1.6v2.4h-1.6zM344.10 174.98h1.6v2.4h-1.6zM344.10 184.84h1.6v2.4h-1.6zM343.90 194.90h2v2h-2zM344.10 204.56h1.6v2.4h-1.6zM344.10 214.42h1.6v2.4h-1.6zM344.10 224.28h1.6v2.4h-1.6zM344.10 234.14h1.6v2.4h-1.6zM343.90 244.20h2v2h-2zM344.10 253.86h1.6v2.4h-1.6zM344.10 263.72h1.6v2.4h-1.6zM344.10 273.58h1.6v2.4h-1.6zM344.10 283.44h1.6v2.4h-1.6zM343.90 293.50h2v2h-2zM344.10 303.16h1.6v2.4h-1.6zM344.10 313.02h1.6v2.4h-1.6zM344.10 322.88h1.6v2.4h-1.6zM344.10 332.74h1.6v2.4h-1.6zM343.90 342.80h2v2h-2zM344.10 352.46h1.6v2.4h-1.6zM344.10 362.32h1.6v2.4h-1.6zM344.10 372.18h1.6v2.4h-1.6zM344.10 382.04h1.6v2.4h-1.6zM343.90 392.10h2v2h-2zM344.10 401.76h1.6v2.4h-1.6zM344.10 411.62h1.6v2.4h-1.6zM344.10 421.48h1.6v2.4h-1.6zM344.10 431.34h1.6v2.4h-1.6zM343.90 441.40h2v2h-2zM344.10 451.06h1.6v2.4h-1.6zM344.10 460.92h1.6v2.4h-1.6zM344.10 470.78h1.6v2.4h-1.6zM344.10 480.64h1.6v2.4h-1.6zM343.90 490.70h2v2h-2zM344.10 500.36h1.6v2.4h-1.6zM344.10 510.22h1.6v2.4h-1.6zM344.10 520.08h1.6v2.4h-1.6zM344.10 529.94h1.6v2.4h-1.6zM391.90 56.66h1.6v2.4h-1.6zM391.90 66.52h1.6v2.4h-1.6zM391.90 76.38h1.6v2.4h-1.6zM391.90 86.24h1.6v2.4h-1.6zM391.70 96.30h2v2h-2zM391.90 105.96h1.6v2.4h-1.6zM391.90 115.82h1.6v2.4h-1.6zM391.90 125.68h1.6v2.4h-1.6zM391.90 135.54h1.6v2.4h-1.6zM391.70 145.60h2v2h-2zM391.90 155.26h1.6v2.4h-1.6zM391.90 165.12h1.6v2.4h-1.6zM391.90 174.98h1.6v2.4h-1.6zM391.90 184.84h1.6v2.4h-1.6zM391.70 194.90h2v2h-2zM391.90 204.56h1.6v2.4h-1.6zM391.90 214.42h1.6v2.4h-1.6zM391.90 224.28h1.6v2.4h-1.6zM391.90 234.14h1.6v2.4h-1.6zM391.70 244.20h2v2h-2zM391.90 253.86h1.6v2.4h-1.6zM391.90 263.72h1.6v2.4h-1.6zM391.90 273.58h1.6v2.4h-1.6zM391.90 283.44h1.6v2.4h-1.6zM391.70 293.50h2v2h-2zM391.90 303.16h1.6v2.4h-1.6zM391.90 313.02h1.6v2.4h-1.6zM391.90 322.88h1.6v2.4h-1.6zM391.90 332.74h1.6v2.4h-1.6zM391.70 342.80h2v2h-2zM391.90 352.46h1.6v2.4h-1.6zM391.90 362.32h1.6v2.4h-1.6zM391.90 372.18h1.6v2.4h-1.6zM391.90 382.04h1.6v2.4h-1.6zM391.70 392.10h2v2h-2zM391.90 401.76h1.6v2.4h-1.6zM391.90 411.62h1.6v2.4h-1.6zM391.90 421.48h1.6v2.4h-1.6zM391.90 431.34h1.6v2.4h-1.6zM391.70 441.40h2v2h-2zM391.90 451.06h1.6v2.4h-1.6zM391.90 460.92h1.6v2.4h-1.6zM391.90 470.78h1.6v2.4h-1.6zM391.90 480.64h1.6v2.4h-1.6zM391.70 490.70h2v2h-2zM391.90 500.36h1.6v2.4h-1.6zM391.90 510.22h1.6v2.4h-1.6zM391.90 520.08h1.6v2.4h-1.6zM391.90 529.94h1.6v2.4h-1.6zM439.70 56.66h1.6v2.4h-1.6zM439.70 66.52h1.6v2.4h-1.6zM439.70 76.38h1.6v2.4h-1.6zM439.70 86.24h1.6v2.4h-1.6zM439.50 96.30h2v2h-2zM439.70 105.96h1.6v2.4h-1.6zM439.70 115.82h1.6v2.4h-1.6zM439.70 125.68h1.6v2.4h-1.6zM439.70 135.54h1.6v2.4h-1.6zM439.50 145.60h2v2h-2zM439.70 155.26h1.6v2.4h-1.6zM439.70 165.12h1.6v2.4h-1.6zM439.70 174.98h1.6v2.4h-1.6zM439.70 184.84h1.6v2.4h-1.6zM439.50 194.90h2v2h-2zM439.70 204.56h1.6v2.4h-1.6zM439.70 214.42h1.6v2.4h-1.6zM439.70 224.28h1.6v2.4h-1.6zM439.70 234.14h1.6v2.4h-1.6zM439.50 244.20h2v2h-2zM439.70 253.86h1.6v2.4h-1.6zM439.70 263.72h1.6v2.4h-1.6zM439.70 273.58h1.6v2.4h-1.6zM439.70 283.44h1.6v2.4h-1.6zM439.50 293.50h2v2h-2zM439.70 303.16h1.6v2.4h-1.6zM439.70 313.02h1.6v2.4h-1.6zM439.70 322.88h1.6v2.4h-1.6zM439.70 332.74h1.6v2.4h-1.6zM439.50 342.80h2v2h-2zM439.70 352.46h1.6v2.4h-1.6zM439.70 362.32h1.6v2.4h-1.6zM439.70 372.18h1.6v2.4h-1.6zM439.70 382.04h1.6v2.4h-1.6zM439.50 392.10h2v2h-2zM439.70 401.76h1.6v2.4h-1.6zM439.70 411.62h1.6v2.4h-1.6zM439.70 421.48h1.6v2.4h-1.6zM439.70 431.34h1.6v2.4h-1.6zM439.50 441.40h2v2h-2zM439.70 451.06h1.6v2.4h-1.6zM439.70 460.92h1.6v2.4h-1.6zM439.70 470.78h1.6v2.4h-1.6zM439.70 480.64h1.6v2.4h-1.6zM439.50 490.70h2v2h-2zM439.70 500.36h1.6v2.4h-1.6zM439.70 510.22h1.6v2.4h-1.6zM439.70 520.08h1.6v2.4h-1.6zM439.70 529.94h1.6v2.4h-1.6zM535.30 56.66h1.6v2.4h-1.6zM535.30 66.52h1.6v2.4h-1.6zM535.30 76.38h1.6v2.4h-1.6zM535.30 86.24h1.6v2.4h-1.6zM535.10 96.30h2v2h-2zM535.30 105.96h1.6v2.4h-1.6zM535.30 115.82h1.6v2.4h-1.6zM535.30 125.68h1.6v2.4h-1.6zM535.30 135.54h1.6v2.4h-1.6zM535.10 145.60h2v2h-2zM535.30 155.26h1.6v2.4h-1.6zM535.30 165.12h1.6v2.4h-1.6zM535.30 174.98h1.6v2.4h-1.6zM535.30 184.84h1.6v2.4h-1.6zM535.10 194.90h2v2h-2zM535.30 204.56h1.6v2.4h-1.6zM535.30 214.42h1.6v2.4h-1.6zM535.30 224.28h1.6v2.4h-1.6zM535.30 234.14h1.6v2.4h-1.6zM535.10 244.20h2v2h-2zM535.30 253.86h1.6v2.4h-1.6zM535.30 263.72h1.6v2.4h-1.6zM535.30 273.58h1.6v2.4h-1.6zM535.30 283.44h1.6v2.4h-1.6zM535.10 293.50h2v2h-2zM535.30 303.16h1.6v2.4h-1.6zM535.30 313.02h1.6v2.4h-1.6zM535.30 322.88h1.6v2.4h-1.6zM535.30 332.74h1.6v2.4h-1.6zM535.10 342.80h2v2h-2zM535.30 352.46h1.6v2.4h-1.6zM535.30 362.32h1.6v2.4h-1.6zM535.30 372.18h1.6v2.4h-1.6zM535.30 382.04h1.6v2.4h-1.6zM535.10 392.10h2v2h-2zM535.30 401.76h1.6v2.4h-1.6zM535.30 411.62h1.6v2.4h-1.6zM535.30 421.48h1.6v2.4h-1.6zM535.30 431.34h1.6v2.4h-1.6zM535.10 441.40h2v2h-2zM535.30 451.06h1.6v2.4h-1.6zM535.30 460.92h1.6v2.4h-1.6zM535.30 470.78h1.6v2.4h-1.6zM535.30 480.64h1.6v2.4h-1.6zM535.10 490.70h2v2h-2zM535.30 500.36h1.6v2.4h-1.6zM535.30 510.22h1.6v2.4h-1.6zM535.30 520.08h1.6v2.4h-1.6zM535.30 529.94h1.6v2.4h-1.6zM583.10 56.66h1.6v2.4h-1.6zM583.10 66.52h1.6v2.4h-1.6zM583.10 76.38h1.6v2.4h-1.6zM583.10 86.24h1.6v2.4h-1.6zM582.90 96.30h2v2h-2zM583.10 105.96h1.6v2.4h-1.6zM583.10 115.82h1.6v2.4h-1.6zM583.10 125.68h1.6v2.4h-1.6zM583.10 135.54h1.6v2.4h-1.6zM582.90 145.60h2v2h-2zM583.10 155.26h1.6v2.4h-1.6zM583.10 165.12h1.6v2.4h-1.6zM583.10 174.98h1.6v2.4h-1.6zM583.10 184.84h1.6v2.4h-1.6zM582.90 194.90h2v2h-2zM583.10 204.56h1.6v2.4h-1.6zM583.10 214.42h1.6v2.4h-1.6zM583.10 224.28h1.6v2.4h-1.6zM583.10 234.14h1.6v2.4h-1.6zM582.90 244.20h2v2h-2zM583.10 253.86h1.6v2.4h-1.6zM583.10 263.72h1.6v2.4h-1.6zM583.10 273.58h1.6v2.4h-1.6zM583.10 283.44h1.6v2.4h-1.6zM582.90 293.50h2v2h-2zM583.10 303.16h1.6v2.4h-1.6zM583.10 313.02h1.6v2.4h-1.6zM583.10 322.88h1.6v2.4h-1.6zM583.10 332.74h1.6v2.4h-1.6zM582.90 342.80h2v2h-2zM583.10 352.46h1.6v2.4h-1.6zM583.10 362.32h1.6v2.4h-1.6zM583.10 372.18h1.6v2.4h-1.6zM583.10 382.04h1.6v2.4h-1.6zM582.90 392.10h2v2h-2zM583.10 401.76h1.6v2.4h-1.6zM583.10 411.62h1.6v2.4h-1.6zM583.10 421.48h1.6v2.4h-1.6zM583.10 431.34h1.6v2.4h-1.6zM582.90 441.40h2v2h-2zM583.10 451.06h1.6v2.4h-1.6zM583.10 460.92h1.6v2.4h-1.6zM583.10 470.78h1.6v2.4h-1.6zM583.10 480.64h1.6v2.4h-1.6zM582.90 490.70h2v2h-2zM583.10 500.36h1.6v2.4h-1.6zM583.10 510.22h1.6v2.4h-1.6zM583.10 520.08h1.6v2.4h-1.6zM583.10 529.94h1.6v2.4h-1.6zM630.90 56.66h1.6v2.4h-1.6zM630.90 66.52h1.6v2.4h-1.6zM630.90 76.38h1.6v2.4h-1.6zM630.90 86.24h1.6v2.4h-1.6zM630.70 96.30h2v2h-2zM630.90 105.96h1.6v2.4h-1.6zM630.90 115.82h1.6v2.4h-1.6zM630.90 125.68h1.6v2.4h-1.6zM630.90 135.54h1.6v2.4h-1.6zM630.70 145.60h2v2h-2zM630.90 155.26h1.6v2.4h-1.6zM630.90 165.12h1.6v2.4h-1.6zM630.90 174.98h1.6v2.4h-1.6zM630.90 184.84h1.6v2.4h-1.6zM630.70 194.90h2v2h-2zM630.90 204.56h1.6v2.4h-1.6zM630.90 214.42h1.6v2.4h-1.6zM630.90 224.28h1.6v2.4h-1.6zM630.90 234.14h1.6v2.4h-1.6zM630.70 244.20h2v2h-2zM630.90 253.86h1.6v2.4h-1.6zM630.90 263.72h1.6v2.4h-1.6zM630.90 273.58h1.6v2.4h-1.6zM630.90 283.44h1.6v2.4h-1.6zM630.70 293.50h2v2h-2zM630.90 303.16h1.6v2.4h-1.6zM630.90 313.02h1.6v2.4h-1.6zM630.90 322.88h1.6v2.4h-1.6zM630.90 332.74h1.6v2.4h-1.6zM630.70 342.80h2v2h-2zM630.90 352.46h1.6v2.4h-1.6zM630.90 362.32h1.6v2.4h-1.6zM630.90 372.18h1.6v2.4h-1.6zM630.90 382.04h1.6v2.4h-1.6zM630.70 392.10h2v2h-2zM630.90 401.76h1.6v2.4h-1.6zM630.90 411.62h1.6v2.4h-1.6zM630.90 421.48h1.6v2.4h-1.6zM630.90 431.34h1.6v2.4h-1.6zM630.70 441.40h2v2h-2zM630.90 451.06h1.6v2.4h-1.6zM630.90 460.92h1.6v2.4h-1.6zM630.90 470.78h1.6v2.4h-1.6zM630.90 480.64h1.6v2.4h-1.6zM630.70 490.70h2v2h-2zM630.90 500.36h1.6v2.4h-1.6zM630.90 510.22h1.6v2.4h-1.6zM630.90 520.08h1.6v2.4h-1.6zM630.90 529.94h1.6v2.4h-1.6zM678.70 56.66h1.6v2.4h-1.6zM678.70 66.52h1.6v2.4h-1.6zM678.70 76.38h1.6v2.4h-1.6zM678.70 86.24h1.6v2.4h-1.6zM678.50 96.30h2v2h-2zM678.70 105.96h1.6v2.4h-1.6zM678.70 115.82h1.6v2.4h-1.6zM678.70 125.68h1.6v2.4h-1.6zM678.70 135.54h1.6v2.4h-1.6zM678.50 145.60h2v2h-2zM678.70 155.26h1.6v2.4h-1.6zM678.70 165.12h1.6v2.4h-1.6zM678.70 174.98h1.6v2.4h-1.6zM678.70 184.84h1.6v2.4h-1.6zM678.50 194.90h2v2h-2zM678.70 204.56h1.6v2.4h-1.6zM678.70 214.42h1.6v2.4h-1.6zM678.70 224.28h1.6v2.4h-1.6zM678.70 234.14h1.6v2.4h-1.6zM678.50 244.20h2v2h-2zM678.70 253.86h1.6v2.4h-1.6zM678.70 263.72h1.6v2.4h-1.6zM678.70 273.58h1.6v2.4h-1.6zM678.70 283.44h1.6v2.4h-1.6zM678.50 293.50h2v2h-2zM678.70 303.16h1.6v2.4h-1.6zM678.70 313.02h1.6v2.4h-1.6zM678.70 322.88h1.6v2.4h-1.6zM678.70 332.74h1.6v2.4h-1.6zM678.50 342.80h2v2h-2zM678.70 352.46h1.6v2.4h-1.6zM678.70 362.32h1.6v2.4h-1.6zM678.70 372.18h1.6v2.4h-1.6zM678.70 382.04h1.6v2.4h-1.6zM678.50 392.10h2v2h-2zM678.70 401.76h1.6v2.4h-1.6zM678.70 411.62h1.6v2.4h-1.6zM678.70 421.48h1.6v2.4h-1.6zM678.70 431.34h1.6v2.4h-1.6zM678.50 441.40h2v2h-2zM678.70 451.06h1.6v2.4h-1.6zM678.70 460.92h1.6v2.4h-1.6zM678.70 470.78h1.6v2.4h-1.6zM678.70 480.64h1.6v2.4h-1.6zM678.50 490.70h2v2h-2zM678.70 500.36h1.6v2.4h-1.6zM678.70 510.22h1.6v2.4h-1.6zM678.70 520.08h1.6v2.4h-1.6zM678.70 529.94h1.6v2.4h-1.6zM726.50 56.66h1.6v2.4h-1.6zM726.50 66.52h1.6v2.4h-1.6zM726.50 76.38h1.6v2.4h-1.6zM726.50 86.24h1.6v2.4h-1.6zM726.30 96.30h2v2h-2zM726.50 105.96h1.6v2.4h-1.6zM726.50 115.82h1.6v2.4h-1.6zM726.50 125.68h1.6v2.4h-1.6zM726.50 135.54h1.6v2.4h-1.6zM726.30 145.60h2v2h-2zM726.50 155.26h1.6v2.4h-1.6zM726.50 165.12h1.6v2.4h-1.6zM726.50 174.98h1.6v2.4h-1.6zM726.50 184.84h1.6v2.4h-1.6zM726.30 194.90h2v2h-2zM726.50 204.56h1.6v2.4h-1.6zM726.50 214.42h1.6v2.4h-1.6zM726.50 224.28h1.6v2.4h-1.6zM726.50 234.14h1.6v2.4h-1.6zM726.30 244.20h2v2h-2zM726.50 253.86h1.6v2.4h-1.6zM726.50 263.72h1.6v2.4h-1.6zM726.50 273.58h1.6v2.4h-1.6zM726.50 283.44h1.6v2.4h-1.6zM726.30 293.50h2v2h-2zM726.50 303.16h1.6v2.4h-1.6zM726.50 313.02h1.6v2.4h-1.6zM726.50 322.88h1.6v2.4h-1.6zM726.50 332.74h1.6v2.4h-1.6zM726.30 342.80h2v2h-2zM726.50 352.46h1.6v2.4h-1.6zM726.50 362.32h1.6v2.4h-1.6zM726.50 372.18h1.6v2.4h-1.6zM726.50 382.04h1.6v2.4h-1.6zM726.30 392.10h2v2h-2zM726.50 401.76h1.6v2.4h-1.6zM726.50 411.62h1.6v2.4h-1.6zM726.50 421.48h1.6v2.4h-1.6zM726.50 431.34h1.6v2.4h-1.6zM726.30 441.40h2v2h-2zM726.50 451.06h1.6v2.4h-1.6zM726.50 460.92h1.6v2.4h-1.6zM726.50 470.78h1.6v2.4h-1.6zM726.50 480.64h1.6v2.4h-1.6zM726.30 490.70h2v2h-2zM726.50 500.36h1.6v2.4h-1.6zM726.50 510.22h1.6v2.4h-1.6zM726.50 520.08h1.6v2.4h-1.6zM726.50 529.94h1.6v2.4h-1.6zM774.30 56.66h1.6v2.4h-1.6zM774.30 66.52h1.6v2.4h-1.6zM774.30 76.38h1.6v2.4h-1.6zM774.30 86.24h1.6v2.4h-1.6zM774.10 96.30h2v2h-2zM774.30 105.96h1.6v2.4h-1.6zM774.30 115.82h1.6v2.4h-1.6zM774.30 125.68h1.6v2.4h-1.6zM774.30 135.54h1.6v2.4h-1.6zM774.10 145.60h2v2h-2zM774.30 155.26h1.6v2.4h-1.6zM774.30 165.12h1.6v2.4h-1.6zM774.30 174.98h1.6v2.4h-1.6zM774.30 184.84h1.6v2.4h-1.6zM774.10 194.90h2v2h-2zM774.30 204.56h1.6v2.4h-1.6zM774.30 214.42h1.6v2.4h-1.6zM774.30 224.28h1.6v2.4h-1.6zM774.30 234.14h1.6v2.4h-1.6zM774.10 244.20h2v2h-2zM774.30 253.86h1.6v2.4h-1.6zM774.30 263.72h1.6v2.4h-1.6zM774.30 273.58h1.6v2.4h-1.6zM774.30 283.44h1.6v2.4h-1.6zM774.10 293.50h2v2h-2zM774.30 303.16h1.6v2.4h-1.6zM774.30 313.02h1.6v2.4h-1.6zM774.30 322.88h1.6v2.4h-1.6zM774.30 332.74h1.6v2.4h-1.6zM774.10 342.80h2v2h-2zM774.30 352.46h1.6v2.4h-1.6zM774.30 362.32h1.6v2.4h-1.6zM774.30 372.18h1.6v2.4h-1.6zM774.30 382.04h1.6v2.4h-1.6zM774.10 392.10h2v2h-2zM774.30 401.76h1.6v2.4h-1.6zM774.30 411.62h1.6v2.4h-1.6zM774.30 421.48h1.6v2.4h-1.6zM774.30 431.34h1.6v2.4h-1.6zM774.10 441.40h2v2h-2zM774.30 451.06h1.6v2.4h-1.6zM774.30 460.92h1.6v2.4h-1.6zM774.30 470.78h1.6v2.4h-1.6zM774.30 480.64h1.6v2.4h-1.6zM774.10 490.70h2v2h-2zM774.30 500.36h1.6v2.4h-1.6zM774.30 510.22h1.6v2.4h-1.6zM774.30 520.08h1.6v2.4h-1.6zM774.30 529.94h1.6v2.4h-1.6zM822.10 56.66h1.6v2.4h-1.6zM822.10 66.52h1.6v2.4h-1.6zM822.10 76.38h1.6v2.4h-1.6zM822.10 86.24h1.6v2.4h-1.6zM821.90 96.30h2v2h-2zM822.10 105.96h1.6v2.4h-1.6zM822.10 115.82h1.6v2.4h-1.6zM822.10 125.68h1.6v2.4h-1.6zM822.10 135.54h1.6v2.4h-1.6zM821.90 145.60h2v2h-2zM822.10 155.26h1.6v2.4h-1.6zM822.10 165.12h1.6v2.4h-1.6zM822.10 174.98h1.6v2.4h-1.6zM822.10 184.84h1.6v2.4h-1.6zM821.90 194.90h2v2h-2zM822.10 204.56h1.6v2.4h-1.6zM822.10 214.42h1.6v2.4h-1.6zM822.10 224.28h1.6v2.4h-1.6zM822.10 234.14h1.6v2.4h-1.6zM821.90 244.20h2v2h-2zM822.10 253.86h1.6v2.4h-1.6zM822.10 263.72h1.6v2.4h-1.6zM822.10 273.58h1.6v2.4h-1.6zM822.10 283.44h1.6v2.4h-1.6zM821.90 293.50h2v2h-2zM822.10 303.16h1.6v2.4h-1.6zM822.10 313.02h1.6v2.4h-1.6zM822.10 322.88h1.6v2.4h-1.6zM822.10 332.74h1.6v2.4h-1.6zM821.90 342.80h2v2h-2zM822.10 352.46h1.6v2.4h-1.6zM822.10 362.32h1.6v2.4h-1.6zM822.10 372.18h1.6v2.4h-1.6zM822.10 382.04h1.6v2.4h-1.6zM821.90 392.10h2v2h-2zM822.10 401.76h1.6v2.4h-1.6zM822.10 411.62h1.6v2.4h-1.6zM822.10 421.48h1.6v2.4h-1.6zM822.10 431.34h1.6v2.4h-1.6zM821.90 441.40h2v2h-2zM822.10 451.06h1.6v2.4h-1.6zM822.10 460.92h1.6v2.4h-1.6zM822.10 470.78h1.6v2.4h-1.6zM822.10 480.64h1.6v2.4h-1.6zM821.90 490.70h2v2h-2zM822.10 500.36h1.6v2.4h-1.6zM822.10 510.22h1.6v2.4h-1.6zM822.10 520.08h1.6v2.4h-1.6zM822.10 529.94h1.6v2.4h-1.6zM869.90 56.66h1.6v2.4h-1.6zM869.90 66.52h1.6v2.4h-1.6zM869.90 76.38h1.6v2.4h-1.6zM869.90 86.24h1.6v2.4h-1.6zM869.70 96.30h2v2h-2zM869.90 105.96h1.6v2.4h-1.6zM869.90 115.82h1.6v2.4h-1.6zM869.90 125.68h1.6v2.4h-1.6zM869.90 135.54h1.6v2.4h-1.6zM869.70 145.60h2v2h-2zM869.90 155.26h1.6v2.4h-1.6zM869.90 165.12h1.6v2.4h-1.6zM869.90 174.98h1.6v2.4h-1.6zM869.90 184.84h1.6v2.4h-1.6zM869.70 194.90h2v2h-2zM869.90 204.56h1.6v2.4h-1.6zM869.90 214.42h1.6v2.4h-1.6zM869.90 224.28h1.6v2.4h-1.6zM869.90 234.14h1.6v2.4h-1.6zM869.70 244.20h2v2h-2zM869.90 253.86h1.6v2.4h-1.6zM869.90 263.72h1.6v2.4h-1.6zM869.90 273.58h1.6v2.4h-1.6zM869.90 283.44h1.6v2.4h-1.6zM869.70 293.50h2v2h-2zM869.90 303.16h1.6v2.4h-1.6zM869.90 313.02h1.6v2.4h-1.6zM869.90 322.88h1.6v2.4h-1.6zM869.90 332.74h1.6v2.4h-1.6zM869.70 342.80h2v2h-2zM869.90 352.46h1.6v2.4h-1.6zM869.90 362.32h1.6v2.4h-1.6zM869.90 372.18h1.6v2.4h-1.6zM869.90 382.04h1.6v2.4h-1.6zM869.70 392.10h2v2h-2zM869.90 401.76h1.6v2.4h-1.6zM869.90 411.62h1.6v2.4h-1.6zM869.90 421.48h1.6v2.4h-1.6zM869.90 431.34h1.6v2.4h-1.6zM869.70 441.40h2v2h-2zM869.90 451.06h1.6v2.4h-1.6zM869.90 460.92h1.6v2.4h-1.6zM869.90 470.78h1.6v2.4h-1.6zM869.90 480.64h1.6v2.4h-1.6zM869.70 490.70h2v2h-2zM869.90 500.36h1.6v2.4h-1.6zM869.90 510.22h1.6v2.4h-1.6zM869.90 520.08h1.6v2.4h-1.6zM869.90 529.94h1.6v2.4h-1.6zM917.70 56.66h1.6v2.4h-1.6zM917.70 66.52h1.6v2.4h-1.6zM917.70 76.38h1.6v2.4h-1.6zM917.70 86.24h1.6v2.4h-1.6zM917.50 96.30h2v2h-2zM917.70 105.96h1.6v2.4h-1.6zM917.70 115.82h1.6v2.4h-1.6zM917.70 125.68h1.6v2.4h-1.6zM917.70 135.54h1.6v2.4h-1.6zM917.50 145.60h2v2h-2zM917.70 155.26h1.6v2.4h-1.6zM917.70 165.12h1.6v2.4h-1.6zM917.70 174.98h1.6v2.4h-1.6zM917.70 184.84h1.6v2.4h-1.6zM917.50 194.90h2v2h-2zM917.70 204.56h1.6v2.4h-1.6zM917.70 214.42h1.6v2.4h-1.6zM917.70 224.28h1.6v2.4h-1.6zM917.70 234.14h1.6v2.4h-1.6zM917.50 244.20h2v2h-2zM917.70 253.86h1.6v2.4h-1.6zM917.70 263.72h1.6v2.4h-1.6zM917.70 273.58h1.6v2.4h-1.6zM917.70 283.44h1.6v2.4h-1.6zM917.50 293.50h2v2h-2zM917.70 303.16h1.6v2.4h-1.6zM917.70 313.02h1.6v2.4h-1.6zM917.70 322.88h1.6v2.4h-1.6zM917.70 332.74h1.6v2.4h-1.6zM917.50 342.80h2v2h-2zM917.70 352.46h1.6v2.4h-1.6zM917.70 362.32h1.6v2.4h-1.6zM917.70 372.18h1.6v2.4h-1.6zM917.70 382.04h1.6v2.4h-1.6zM917.50 392.10h2v2h-2zM917.70 401.76h1.6v2.4h-1.6zM917.70 411.62h1.6v2.4h-1.6zM917.70 421.48h1.6v2.4h-1.6zM917.70 431.34h1.6v2.4h-1.6zM917.50 441.40h2v2h-2zM917.70 451.06h1.6v2.4h-1.6zM917.70 460.92h1.6v2.4h-1.6zM917.70 470.78h1.6v2.4h-1.6zM917.70 480.64h1.6v2.4h-1.6zM917.50 490.70h2v2h-2zM917.70 500.36h1.6v2.4h-1.6zM917.70 510.22h1.6v2.4h-1.6zM917.70 520.08h1.6v2.4h-1.6zM917.70 529.94h1.6v2.4h-1.6zM18.66 96.50h2.4v1.6h-2.4zM28.22 96.50h2.4v1.6h-2.4zM37.78 96.50h2.4v1.6h-2.4zM47.34 96.50h2.4v1.6h-2.4zM66.46 96.50h2.4v1.6h-2.4zM76.02 96.50h2.4v1.6h-2.4zM85.58 96.50h2.4v1.6h-2.4zM95.14 96.50h2.4v1.6h-2.4zM114.26 96.50h2.4v1.6h-2.4zM123.82 96.50h2.4v1.6h-2.4zM133.38 96.50h2.4v1.6h-2.4zM142.94 96.50h2.4v1.6h-2.4zM162.06 96.50h2.4v1.6h-2.4zM171.62 96.50h2.4v1.6h-2.4zM181.18 96.50h2.4v1.6h-2.4zM190.74 96.50h2.4v1.6h-2.4zM209.86 96.50h2.4v1.6h-2.4zM219.42 96.50h2.4v1.6h-2.4zM228.98 96.50h2.4v1.6h-2.4zM238.54 96.50h2.4v1.6h-2.4zM257.66 96.50h2.4v1.6h-2.4zM267.22 96.50h2.4v1.6h-2.4zM276.78 96.50h2.4v1.6h-2.4zM286.34 96.50h2.4v1.6h-2.4zM305.46 96.50h2.4v1.6h-2.4zM315.02 96.50h2.4v1.6h-2.4zM324.58 96.50h2.4v1.6h-2.4zM334.14 96.50h2.4v1.6h-2.4zM353.26 96.50h2.4v1.6h-2.4zM362.82 96.50h2.4v1.6h-2.4zM372.38 96.50h2.4v1.6h-2.4zM381.94 96.50h2.4v1.6h-2.4zM401.06 96.50h2.4v1.6h-2.4zM410.62 96.50h2.4v1.6h-2.4zM420.18 96.50h2.4v1.6h-2.4zM429.74 96.50h2.4v1.6h-2.4zM448.86 96.50h2.4v1.6h-2.4zM458.42 96.50h2.4v1.6h-2.4zM467.98 96.50h2.4v1.6h-2.4zM477.54 96.50h2.4v1.6h-2.4zM496.66 96.50h2.4v1.6h-2.4zM506.22 96.50h2.4v1.6h-2.4zM515.78 96.50h2.4v1.6h-2.4zM525.34 96.50h2.4v1.6h-2.4zM544.46 96.50h2.4v1.6h-2.4zM554.02 96.50h2.4v1.6h-2.4zM563.58 96.50h2.4v1.6h-2.4zM573.14 96.50h2.4v1.6h-2.4zM592.26 96.50h2.4v1.6h-2.4zM601.82 96.50h2.4v1.6h-2.4zM611.38 96.50h2.4v1.6h-2.4zM620.94 96.50h2.4v1.6h-2.4zM640.06 96.50h2.4v1.6h-2.4zM649.62 96.50h2.4v1.6h-2.4zM659.18 96.50h2.4v1.6h-2.4zM668.74 96.50h2.4v1.6h-2.4zM687.86 96.50h2.4v1.6h-2.4zM697.42 96.50h2.4v1.6h-2.4zM706.98 96.50h2.4v1.6h-2.4zM716.54 96.50h2.4v1.6h-2.4zM735.66 96.50h2.4v1.6h-2.4zM745.22 96.50h2.4v1.6h-2.4zM754.78 96.50h2.4v1.6h-2.4zM764.34 96.50h2.4v1.6h-2.4zM783.46 96.50h2.4v1.6h-2.4zM793.02 96.50h2.4v1.6h-2.4zM802.58 96.50h2.4v1.6h-2.4zM812.14 96.50h2.4v1.6h-2.4zM831.26 96.50h2.4v1.6h-2.4zM840.82 96.50h2.4v1.6h-2.4zM850.38 96.50h2.4v1.6h-2.4zM859.94 96.50h2.4v1.6h-2.4zM879.06 96.50h2.4v1.6h-2.4zM888.62 96.50h2.4v1.6h-2.4zM898.18 96.50h2.4v1.6h-2.4zM907.74 96.50h2.4v1.6h-2.4zM926.86 96.50h2.4v1.6h-2.4zM936.42 96.50h2.4v1.6h-2.4zM945.98 96.50h2.4v1.6h-2.4zM955.54 96.50h2.4v1.6h-2.4zM18.66 145.80h2.4v1.6h-2.4zM28.22 145.80h2.4v1.6h-2.4zM37.78 145.80h2.4v1.6h-2.4zM47.34 145.80h2.4v1.6h-2.4zM66.46 145.80h2.4v1.6h-2.4zM76.02 145.80h2.4v1.6h-2.4zM85.58 145.80h2.4v1.6h-2.4zM95.14 145.80h2.4v1.6h-2.4zM114.26 145.80h2.4v1.6h-2.4zM123.82 145.80h2.4v1.6h-2.4zM133.38 145.80h2.4v1.6h-2.4zM142.94 145.80h2.4v1.6h-2.4zM162.06 145.80h2.4v1.6h-2.4zM171.62 145.80h2.4v1.6h-2.4zM181.18 145.80h2.4v1.6h-2.4zM190.74 145.80h2.4v1.6h-2.4zM209.86 145.80h2.4v1.6h-2.4zM219.42 145.80h2.4v1.6h-2.4zM228.98 145.80h2.4v1.6h-2.4zM238.54 145.80h2.4v1.6h-2.4zM257.66 145.80h2.4v1.6h-2.4zM267.22 145.80h2.4v1.6h-2.4zM276.78 145.80h2.4v1.6h-2.4zM286.34 145.80h2.4v1.6h-2.4zM305.46 145.80h2.4v1.6h-2.4zM315.02 145.80h2.4v1.6h-2.4zM324.58 145.80h2.4v1.6h-2.4zM334.14 145.80h2.4v1.6h-2.4zM353.26 145.80h2.4v1.6h-2.4zM362.82 145.80h2.4v1.6h-2.4zM372.38 145.80h2.4v1.6h-2.4zM381.94 145.80h2.4v1.6h-2.4zM401.06 145.80h2.4v1.6h-2.4zM410.62 145.80h2.4v1.6h-2.4zM420.18 145.80h2.4v1.6h-2.4zM429.74 145.80h2.4v1.6h-2.4zM448.86 145.80h2.4v1.6h-2.4zM458.42 145.80h2.4v1.6h-2.4zM467.98 145.80h2.4v1.6h-2.4zM477.54 145.80h2.4v1.6h-2.4zM496.66 145.80h2.4v1.6h-2.4zM506.22 145.80h2.4v1.6h-2.4zM515.78 145.80h2.4v1.6h-2.4zM525.34 145.80h2.4v1.6h-2.4zM544.46 145.80h2.4v1.6h-2.4zM554.02 145.80h2.4v1.6h-2.4zM563.58 145.80h2.4v1.6h-2.4zM573.14 145.80h2.4v1.6h-2.4zM592.26 145.80h2.4v1.6h-2.4zM601.82 145.80h2.4v1.6h-2.4zM611.38 145.80h2.4v1.6h-2.4zM620.94 145.80h2.4v1.6h-2.4zM640.06 145.80h2.4v1.6h-2.4zM649.62 145.80h2.4v1.6h-2.4zM659.18 145.80h2.4v1.6h-2.4zM668.74 145.80h2.4v1.6h-2.4zM687.86 145.80h2.4v1.6h-2.4zM697.42 145.80h2.4v1.6h-2.4zM706.98 145.80h2.4v1.6h-2.4zM716.54 145.80h2.4v1.6h-2.4zM735.66 145.80h2.4v1.6h-2.4zM745.22 145.80h2.4v1.6h-2.4zM754.78 145.80h2.4v1.6h-2.4zM764.34 145.80h2.4v1.6h-2.4zM783.46 145.80h2.4v1.6h-2.4zM793.02 145.80h2.4v1.6h-2.4zM802.58 145.80h2.4v1.6h-2.4zM812.14 145.80h2.4v1.6h-2.4zM831.26 145.80h2.4v1.6h-2.4zM840.82 145.80h2.4v1.6h-2.4zM850.38 145.80h2.4v1.6h-2.4zM859.94 145.80h2.4v1.6h-2.4zM879.06 145.80h2.4v1.6h-2.4zM888.62 145.80h2.4v1.6h-2.4zM898.18 145.80h2.4v1.6h-2.4zM907.74 145.80h2.4v1.6h-2.4zM926.86 145.80h2.4v1.6h-2.4zM936.42 145.80h2.4v1.6h-2.4zM945.98 145.80h2.4v1.6h-2.4zM955.54 145.80h2.4v1.6h-2.4zM18.66 195.10h2.4v1.6h-2.4zM28.22 195.10h2.4v1.6h-2.4zM37.78 195.10h2.4v1.6h-2.4zM47.34 195.10h2.4v1.6h-2.4zM66.46 195.10h2.4v1.6h-2.4zM76.02 195.10h2.4v1.6h-2.4zM85.58 195.10h2.4v1.6h-2.4zM95.14 195.10h2.4v1.6h-2.4zM114.26 195.10h2.4v1.6h-2.4zM123.82 195.10h2.4v1.6h-2.4zM133.38 195.10h2.4v1.6h-2.4zM142.94 195.10h2.4v1.6h-2.4zM162.06 195.10h2.4v1.6h-2.4zM171.62 195.10h2.4v1.6h-2.4zM181.18 195.10h2.4v1.6h-2.4zM190.74 195.10h2.4v1.6h-2.4zM209.86 195.10h2.4v1.6h-2.4zM219.42 195.10h2.4v1.6h-2.4zM228.98 195.10h2.4v1.6h-2.4zM238.54 195.10h2.4v1.6h-2.4zM257.66 195.10h2.4v1.6h-2.4zM267.22 195.10h2.4v1.6h-2.4zM276.78 195.10h2.4v1.6h-2.4zM286.34 195.10h2.4v1.6h-2.4zM305.46 195.10h2.4v1.6h-2.4zM315.02 195.10h2.4v1.6h-2.4zM324.58 195.10h2.4v1.6h-2.4zM334.14 195.10h2.4v1.6h-2.4zM353.26 195.10h2.4v1.6h-2.4zM362.82 195.10h2.4v1.6h-2.4zM372.38 195.10h2.4v1.6h-2.4zM381.94 195.10h2.4v1.6h-2.4zM401.06 195.10h2.4v1.6h-2.4zM410.62 195.10h2.4v1.6h-2.4zM420.18 195.10h2.4v1.6h-2.4zM429.74 195.10h2.4v1.6h-2.4zM448.86 195.10h2.4v1.6h-2.4zM458.42 195.10h2.4v1.6h-2.4zM467.98 195.10h2.4v1.6h-2.4zM477.54 195.10h2.4v1.6h-2.4zM496.66 195.10h2.4v1.6h-2.4zM506.22 195.10h2.4v1.6h-2.4zM515.78 195.10h2.4v1.6h-2.4zM525.34 195.10h2.4v1.6h-2.4zM544.46 195.10h2.4v1.6h-2.4zM554.02 195.10h2.4v1.6h-2.4zM563.58 195.10h2.4v1.6h-2.4zM573.14 195.10h2.4v1.6h-2.4zM592.26 195.10h2.4v1.6h-2.4zM601.82 195.10h2.4v1.6h-2.4zM611.38 195.10h2.4v1.6h-2.4zM620.94 195.10h2.4v1.6h-2.4zM640.06 195.10h2.4v1.6h-2.4zM649.62 195.10h2.4v1.6h-2.4zM659.18 195.10h2.4v1.6h-2.4zM668.74 195.10h2.4v1.6h-2.4zM687.86 195.10h2.4v1.6h-2.4zM697.42 195.10h2.4v1.6h-2.4zM706.98 195.10h2.4v1.6h-2.4zM716.54 195.10h2.4v1.6h-2.4zM735.66 195.10h2.4v1.6h-2.4zM745.22 195.10h2.4v1.6h-2.4zM754.78 195.10h2.4v1.6h-2.4zM764.34 195.10h2.4v1.6h-2.4zM783.46 195.10h2.4v1.6h-2.4zM793.02 195.10h2.4v1.6h-2.4zM802.58 195.10h2.4v1.6h-2.4zM812.14 195.10h2.4v1.6h-2.4zM831.26 195.10h2.4v1.6h-2.4zM840.82 195.10h2.4v1.6h-2.4zM850.38 195.10h2.4v1.6h-2.4zM859.94 195.10h2.4v1.6h-2.4zM879.06 195.10h2.4v1.6h-2.4zM888.62 195.10h2.4v1.6h-2.4zM898.18 195.10h2.4v1.6h-2.4zM907.74 195.10h2.4v1.6h-2.4zM926.86 195.10h2.4v1.6h-2.4zM936.42 195.10h2.4v1.6h-2.4zM945.98 195.10h2.4v1.6h-2.4zM955.54 195.10h2.4v1.6h-2.4zM18.66 244.40h2.4v1.6h-2.4zM28.22 244.40h2.4v1.6h-2.4zM37.78 244.40h2.4v1.6h-2.4zM47.34 244.40h2.4v1.6h-2.4zM66.46 244.40h2.4v1.6h-2.4zM76.02 244.40h2.4v1.6h-2.4zM85.58 244.40h2.4v1.6h-2.4zM95.14 244.40h2.4v1.6h-2.4zM114.26 244.40h2.4v1.6h-2.4zM123.82 244.40h2.4v1.6h-2.4zM133.38 244.40h2.4v1.6h-2.4zM142.94 244.40h2.4v1.6h-2.4zM162.06 244.40h2.4v1.6h-2.4zM171.62 244.40h2.4v1.6h-2.4zM181.18 244.40h2.4v1.6h-2.4zM190.74 244.40h2.4v1.6h-2.4zM209.86 244.40h2.4v1.6h-2.4zM219.42 244.40h2.4v1.6h-2.4zM228.98 244.40h2.4v1.6h-2.4zM238.54 244.40h2.4v1.6h-2.4zM257.66 244.40h2.4v1.6h-2.4zM267.22 244.40h2.4v1.6h-2.4zM276.78 244.40h2.4v1.6h-2.4zM286.34 244.40h2.4v1.6h-2.4zM305.46 244.40h2.4v1.6h-2.4zM315.02 244.40h2.4v1.6h-2.4zM324.58 244.40h2.4v1.6h-2.4zM334.14 244.40h2.4v1.6h-2.4zM353.26 244.40h2.4v1.6h-2.4zM362.82 244.40h2.4v1.6h-2.4zM372.38 244.40h2.4v1.6h-2.4zM381.94 244.40h2.4v1.6h-2.4zM401.06 244.40h2.4v1.6h-2.4zM410.62 244.40h2.4v1.6h-2.4zM420.18 244.40h2.4v1.6h-2.4zM429.74 244.40h2.4v1.6h-2.4zM448.86 244.40h2.4v1.6h-2.4zM458.42 244.40h2.4v1.6h-2.4zM467.98 244.40h2.4v1.6h-2.4zM477.54 244.40h2.4v1.6h-2.4zM496.66 244.40h2.4v1.6h-2.4zM506.22 244.40h2.4v1.6h-2.4zM515.78 244.40h2.4v1.6h-2.4zM525.34 244.40h2.4v1.6h-2.4zM544.46 244.40h2.4v1.6h-2.4zM554.02 244.40h2.4v1.6h-2.4zM563.58 244.40h2.4v1.6h-2.4zM573.14 244.40h2.4v1.6h-2.4zM592.26 244.40h2.4v1.6h-2.4zM601.82 244.40h2.4v1.6h-2.4zM611.38 244.40h2.4v1.6h-2.4zM620.94 244.40h2.4v1.6h-2.4zM640.06 244.40h2.4v1.6h-2.4zM649.62 244.40h2.4v1.6h-2.4zM659.18 244.40h2.4v1.6h-2.4zM668.74 244.40h2.4v1.6h-2.4zM687.86 244.40h2.4v1.6h-2.4zM697.42 244.40h2.4v1.6h-2.4zM706.98 244.40h2.4v1.6h-2.4zM716.54 244.40h2.4v1.6h-2.4zM735.66 244.40h2.4v1.6h-2.4zM745.22 244.40h2.4v1.6h-2.4zM754.78 244.40h2.4v1.6h-2.4zM764.34 244.40h2.4v1.6h-2.4zM783.46 244.40h2.4v1.6h-2.4zM793.02 244.40h2.4v1.6h-2.4zM802.58 244.40h2.4v1.6h-2.4zM812.14 244.40h2.4v1.6h-2.4zM831.26 244.40h2.4v1.6h-2.4zM840.82 244.40h2.4v1.6h-2.4zM850.38 244.40h2.4v1.6h-2.4zM859.94 244.40h2.4v1.6h-2.4zM879.06 244.40h2.4v1.6h-2.4zM888.62 244.40h2.4v1.6h-2.4zM898.18 244.40h2.4v1.6h-2.4zM907.74 244.40h2.4v1.6h-2.4zM926.86 244.40h2.4v1.6h-2.4zM936.42 244.40h2.4v1.6h-2.4zM945.98 244.40h2.4v1.6h-2.4zM955.54 244.40h2.4v1.6h-2.4zM18.66 343.00h2.4v1.6h-2.4zM28.22 343.00h2.4v1.6h-2.4zM37.78 343.00h2.4v1.6h-2.4zM47.34 343.00h2.4v1.6h-2.4zM66.46 343.00h2.4v1.6h-2.4zM76.02 343.00h2.4v1.6h-2.4zM85.58 343.00h2.4v1.6h-2.4zM95.14 343.00h2.4v1.6h-2.4zM114.26 343.00h2.4v1.6h-2.4zM123.82 343.00h2.4v1.6h-2.4zM133.38 343.00h2.4v1.6h-2.4zM142.94 343.00h2.4v1.6h-2.4zM162.06 343.00h2.4v1.6h-2.4zM171.62 343.00h2.4v1.6h-2.4zM181.18 343.00h2.4v1.6h-2.4zM190.74 343.00h2.4v1.6h-2.4zM209.86 343.00h2.4v1.6h-2.4zM219.42 343.00h2.4v1.6h-2.4zM228.98 343.00h2.4v1.6h-2.4zM238.54 343.00h2.4v1.6h-2.4zM257.66 343.00h2.4v1.6h-2.4zM267.22 343.00h2.4v1.6h-2.4zM276.78 343.00h2.4v1.6h-2.4zM286.34 343.00h2.4v1.6h-2.4zM305.46 343.00h2.4v1.6h-2.4zM315.02 343.00h2.4v1.6h-2.4zM324.58 343.00h2.4v1.6h-2.4zM334.14 343.00h2.4v1.6h-2.4zM353.26 343.00h2.4v1.6h-2.4zM362.82 343.00h2.4v1.6h-2.4zM372.38 343.00h2.4v1.6h-2.4zM381.94 343.00h2.4v1.6h-2.4zM401.06 343.00h2.4v1.6h-2.4zM410.62 343.00h2.4v1.6h-2.4zM420.18 343.00h2.4v1.6h-2.4zM429.74 343.00h2.4v1.6h-2.4zM448.86 343.00h2.4v1.6h-2.4zM458.42 343.00h2.4v1.6h-2.4zM467.98 343.00h2.4v1.6h-2.4zM477.54 343.00h2.4v1.6h-2.4zM496.66 343.00h2.4v1.6h-2.4zM506.22 343.00h2.4v1.6h-2.4zM515.78 343.00h2.4v1.6h-2.4zM525.34 343.00h2.4v1.6h-2.4zM544.46 343.00h2.4v1.6h-2.4zM554.02 343.00h2.4v1.6h-2.4zM563.58 343.00h2.4v1.6h-2.4zM573.14 343.00h2.4v1.6h-2.4zM592.26 343.00h2.4v1.6h-2.4zM601.82 343.00h2.4v1.6h-2.4zM611.38 343.00h2.4v1.6h-2.4zM620.94 343.00h2.4v1.6h-2.4zM640.06 343.00h2.4v1.6h-2.4zM649.62 343.00h2.4v1.6h-2.4zM659.18 343.00h2.4v1.6h-2.4zM668.74 343.00h2.4v1.6h-2.4zM687.86 343.00h2.4v1.6h-2.4zM697.42 343.00h2.4v1.6h-2.4zM706.98 343.00h2.4v1.6h-2.4zM716.54 343.00h2.4v1.6h-2.4zM735.66 343.00h2.4v1.6h-2.4zM745.22 343.00h2.4v1.6h-2.4zM754.78 343.00h2.4v1.6h-2.4zM764.34 343.00h2.4v1.6h-2.4zM783.46 343.00h2.4v1.6h-2.4zM793.02 343.00h2.4v1.6h-2.4zM802.58 343.00h2.4v1.6h-2.4zM812.14 343.00h2.4v1.6h-2.4zM831.26 343.00h2.4v1.6h-2.4zM840.82 343.00h2.4v1.6h-2.4zM850.38 343.00h2.4v1.6h-2.4zM859.94 343.00h2.4v1.6h-2.4zM879.06 343.00h2.4v1.6h-2.4zM888.62 343.00h2.4v1.6h-2.4zM898.18 343.00h2.4v1.6h-2.4zM907.74 343.00h2.4v1.6h-2.4zM926.86 343.00h2.4v1.6h-2.4zM936.42 343.00h2.4v1.6h-2.4zM945.98 343.00h2.4v1.6h-2.4zM955.54 343.00h2.4v1.6h-2.4zM18.66 392.30h2.4v1.6h-2.4zM28.22 392.30h2.4v1.6h-2.4zM37.78 392.30h2.4v1.6h-2.4zM47.34 392.30h2.4v1.6h-2.4zM66.46 392.30h2.4v1.6h-2.4zM76.02 392.30h2.4v1.6h-2.4zM85.58 392.30h2.4v1.6h-2.4zM95.14 392.30h2.4v1.6h-2.4zM114.26 392.30h2.4v1.6h-2.4zM123.82 392.30h2.4v1.6h-2.4zM133.38 392.30h2.4v1.6h-2.4zM142.94 392.30h2.4v1.6h-2.4zM162.06 392.30h2.4v1.6h-2.4zM171.62 392.30h2.4v1.6h-2.4zM181.18 392.30h2.4v1.6h-2.4zM190.74 392.30h2.4v1.6h-2.4zM209.86 392.30h2.4v1.6h-2.4zM219.42 392.30h2.4v1.6h-2.4zM228.98 392.30h2.4v1.6h-2.4zM238.54 392.30h2.4v1.6h-2.4zM257.66 392.30h2.4v1.6h-2.4zM267.22 392.30h2.4v1.6h-2.4zM276.78 392.30h2.4v1.6h-2.4zM286.34 392.30h2.4v1.6h-2.4zM305.46 392.30h2.4v1.6h-2.4zM315.02 392.30h2.4v1.6h-2.4zM324.58 392.30h2.4v1.6h-2.4zM334.14 392.30h2.4v1.6h-2.4zM353.26 392.30h2.4v1.6h-2.4zM362.82 392.30h2.4v1.6h-2.4zM372.38 392.30h2.4v1.6h-2.4zM381.94 392.30h2.4v1.6h-2.4zM401.06 392.30h2.4v1.6h-2.4zM410.62 392.30h2.4v1.6h-2.4zM420.18 392.30h2.4v1.6h-2.4zM429.74 392.30h2.4v1.6h-2.4zM448.86 392.30h2.4v1.6h-2.4zM458.42 392.30h2.4v1.6h-2.4zM467.98 392.30h2.4v1.6h-2.4zM477.54 392.30h2.4v1.6h-2.4zM496.66 392.30h2.4v1.6h-2.4zM506.22 392.30h2.4v1.6h-2.4zM515.78 392.30h2.4v1.6h-2.4zM525.34 392.30h2.4v1.6h-2.4zM544.46 392.30h2.4v1.6h-2.4zM554.02 392.30h2.4v1.6h-2.4zM563.58 392.30h2.4v1.6h-2.4zM573.14 392.30h2.4v1.6h-2.4zM592.26 392.30h2.4v1.6h-2.4zM601.82 392.30h2.4v1.6h-2.4zM611.38 392.30h2.4v1.6h-2.4zM620.94 392.30h2.4v1.6h-2.4zM640.06 392.30h2.4v1.6h-2.4zM649.62 392.30h2.4v1.6h-2.4zM659.18 392.30h2.4v1.6h-2.4zM668.74 392.30h2.4v1.6h-2.4zM687.86 392.30h2.4v1.6h-2.4zM697.42 392.30h2.4v1.6h-2.4zM706.98 392.30h2.4v1.6h-2.4zM716.54 392.30h2.4v1.6h-2.4zM735.66 392.30h2.4v1.6h-2.4zM745.22 392.30h2.4v1.6h-2.4zM754.78 392.30h2.4v1.6h-2.4zM764.34 392.30h2.4v1.6h-2.4zM783.46 392.30h2.4v1.6h-2.4zM793.02 392.30h2.4v1.6h-2.4zM802.58 392.30h2.4v1.6h-2.4zM812.14 392.30h2.4v1.6h-2.4zM831.26 392.30h2.4v1.6h-2.4zM840.82 392.30h2.4v1.6h-2.4zM850.38 392.30h2.4v1.6h-2.4zM859.94 392.30h2.4v1.6h-2.4zM879.06 392.30h2.4v1.6h-2.4zM888.62 392.30h2.4v1.6h-2.4zM898.18 392.30h2.4v1.6h-2.4zM907.74 392.30h2.4v1.6h-2.4zM926.86 392.30h2.4v1.6h-2.4zM936.42 392.30h2.4v1.6h-2.4zM945.98 392.30h2.4v1.6h-2.4zM955.54 392.30h2.4v1.6h-2.4zM18.66 441.60h2.4v1.6h-2.4zM28.22 441.60h2.4v1.6h-2.4zM37.78 441.60h2.4v1.6h-2.4zM47.34 441.60h2.4v1.6h-2.4zM66.46 441.60h2.4v1.6h-2.4zM76.02 441.60h2.4v1.6h-2.4zM85.58 441.60h2.4v1.6h-2.4zM95.14 441.60h2.4v1.6h-2.4zM114.26 441.60h2.4v1.6h-2.4zM123.82 441.60h2.4v1.6h-2.4zM133.38 441.60h2.4v1.6h-2.4zM142.94 441.60h2.4v1.6h-2.4zM162.06 441.60h2.4v1.6h-2.4zM171.62 441.60h2.4v1.6h-2.4zM181.18 441.60h2.4v1.6h-2.4zM190.74 441.60h2.4v1.6h-2.4zM209.86 441.60h2.4v1.6h-2.4zM219.42 441.60h2.4v1.6h-2.4zM228.98 441.60h2.4v1.6h-2.4zM238.54 441.60h2.4v1.6h-2.4zM257.66 441.60h2.4v1.6h-2.4zM267.22 441.60h2.4v1.6h-2.4zM276.78 441.60h2.4v1.6h-2.4zM286.34 441.60h2.4v1.6h-2.4zM305.46 441.60h2.4v1.6h-2.4zM315.02 441.60h2.4v1.6h-2.4zM324.58 441.60h2.4v1.6h-2.4zM334.14 441.60h2.4v1.6h-2.4zM353.26 441.60h2.4v1.6h-2.4zM362.82 441.60h2.4v1.6h-2.4zM372.38 441.60h2.4v1.6h-2.4zM381.94 441.60h2.4v1.6h-2.4zM401.06 441.60h2.4v1.6h-2.4zM410.62 441.60h2.4v1.6h-2.4zM420.18 441.60h2.4v1.6h-2.4zM429.74 441.60h2.4v1.6h-2.4zM448.86 441.60h2.4v1.6h-2.4zM458.42 441.60h2.4v1.6h-2.4zM467.98 441.60h2.4v1.6h-2.4zM477.54 441.60h2.4v1.6h-2.4zM496.66 441.60h2.4v1.6h-2.4zM506.22 441.60h2.4v1.6h-2.4zM515.78 441.60h2.4v1.6h-2.4zM525.34 441.60h2.4v1.6h-2.4zM544.46 441.60h2.4v1.6h-2.4zM554.02 441.60h2.4v1.6h-2.4zM563.58 441.60h2.4v1.6h-2.4zM573.14 441.60h2.4v1.6h-2.4zM592.26 441.60h2.4v1.6h-2.4zM601.82 441.60h2.4v1.6h-2.4zM611.38 441.60h2.4v1.6h-2.4zM620.94 441.60h2.4v1.6h-2.4zM640.06 441.60h2.4v1.6h-2.4zM649.62 441.60h2.4v1.6h-2.4zM659.18 441.60h2.4v1.6h-2.4zM668.74 441.60h2.4v1.6h-2.4zM687.86 441.60h2.4v1.6h-2.4zM697.42 441.60h2.4v1.6h-2.4zM706.98 441.60h2.4v1.6h-2.4zM716.54 441.60h2.4v1.6h-2.4zM735.66 441.60h2.4v1.6h-2.4zM745.22 441.60h2.4v1.6h-2.4zM754.78 441.60h2.4v1.6h-2.4zM764.34 441.60h2.4v1.6h-2.4zM783.46 441.60h2.4v1.6h-2.4zM793.02 441.60h2.4v1.6h-2.4zM802.58 441.60h2.4v1.6h-2.4zM812.14 441.60h2.4v1.6h-2.4zM831.26 441.60h2.4v1.6h-2.4zM840.82 441.60h2.4v1.6h-2.4zM850.38 441.60h2.4v1.6h-2.4zM859.94 441.60h2.4v1.6h-2.4zM879.06 441.60h2.4v1.6h-2.4zM888.62 441.60h2.4v1.6h-2.4zM898.18 441.60h2.4v1.6h-2.4zM907.74 441.60h2.4v1.6h-2.4zM926.86 441.60h2.4v1.6h-2.4zM936.42 441.60h2.4v1.6h-2.4zM945.98 441.60h2.4v1.6h-2.4zM955.54 441.60h2.4v1.6h-2.4zM18.66 490.90h2.4v1.6h-2.4zM28.22 490.90h2.4v1.6h-2.4zM37.78 490.90h2.4v1.6h-2.4zM47.34 490.90h2.4v1.6h-2.4zM66.46 490.90h2.4v1.6h-2.4zM76.02 490.90h2.4v1.6h-2.4zM85.58 490.90h2.4v1.6h-2.4zM95.14 490.90h2.4v1.6h-2.4zM114.26 490.90h2.4v1.6h-2.4zM123.82 490.90h2.4v1.6h-2.4zM133.38 490.90h2.4v1.6h-2.4zM142.94 490.90h2.4v1.6h-2.4zM162.06 490.90h2.4v1.6h-2.4zM171.62 490.90h2.4v1.6h-2.4zM181.18 490.90h2.4v1.6h-2.4zM190.74 490.90h2.4v1.6h-2.4zM209.86 490.90h2.4v1.6h-2.4zM219.42 490.90h2.4v1.6h-2.4zM228.98 490.90h2.4v1.6h-2.4zM238.54 490.90h2.4v1.6h-2.4zM257.66 490.90h2.4v1.6h-2.4zM267.22 490.90h2.4v1.6h-2.4zM276.78 490.90h2.4v1.6h-2.4zM286.34 490.90h2.4v1.6h-2.4zM305.46 490.90h2.4v1.6h-2.4zM315.02 490.90h2.4v1.6h-2.4zM324.58 490.90h2.4v1.6h-2.4zM334.14 490.90h2.4v1.6h-2.4zM353.26 490.90h2.4v1.6h-2.4zM362.82 490.90h2.4v1.6h-2.4zM372.38 490.90h2.4v1.6h-2.4zM381.94 490.90h2.4v1.6h-2.4zM401.06 490.90h2.4v1.6h-2.4zM410.62 490.90h2.4v1.6h-2.4zM420.18 490.90h2.4v1.6h-2.4zM429.74 490.90h2.4v1.6h-2.4zM448.86 490.90h2.4v1.6h-2.4zM458.42 490.90h2.4v1.6h-2.4zM467.98 490.90h2.4v1.6h-2.4zM477.54 490.90h2.4v1.6h-2.4zM496.66 490.90h2.4v1.6h-2.4zM506.22 490.90h2.4v1.6h-2.4zM515.78 490.90h2.4v1.6h-2.4zM525.34 490.90h2.4v1.6h-2.4zM544.46 490.90h2.4v1.6h-2.4zM554.02 490.90h2.4v1.6h-2.4zM563.58 490.90h2.4v1.6h-2.4zM573.14 490.90h2.4v1.6h-2.4zM592.26 490.90h2.4v1.6h-2.4zM601.82 490.90h2.4v1.6h-2.4zM611.38 490.90h2.4v1.6h-2.4zM620.94 490.90h2.4v1.6h-2.4zM640.06 490.90h2.4v1.6h-2.4zM649.62 490.90h2.4v1.6h-2.4zM659.18 490.90h2.4v1.6h-2.4zM668.74 490.90h2.4v1.6h-2.4zM687.86 490.90h2.4v1.6h-2.4zM697.42 490.90h2.4v1.6h-2.4zM706.98 490.90h2.4v1.6h-2.4zM716.54 490.90h2.4v1.6h-2.4zM735.66 490.90h2.4v1.6h-2.4zM745.22 490.90h2.4v1.6h-2.4zM754.78 490.90h2.4v1.6h-2.4zM764.34 490.90h2.4v1.6h-2.4zM783.46 490.90h2.4v1.6h-2.4zM793.02 490.90h2.4v1.6h-2.4zM802.58 490.90h2.4v1.6h-2.4zM812.14 490.90h2.4v1.6h-2.4zM831.26 490.90h2.4v1.6h-2.4zM840.82 490.90h2.4v1.6h-2.4zM850.38 490.90h2.4v1.6h-2.4zM859.94 490.90h2.4v1.6h-2.4zM879.06 490.90h2.4v1.6h-2.4zM888.62 490.90h2.4v1.6h-2.4zM898.18 490.90h2.4v1.6h-2.4zM907.74 490.90h2.4v1.6h-2.4zM926.86 490.90h2.4v1.6h-2.4zM936.42 490.90h2.4v1.6h-2.4zM945.98 490.90h2.4v1.6h-2.4zM955.54 490.90h2.4v1.6h-2.4z"/><path stroke="#606060" stroke-width="1.2" fill="none" d="M244.80 195.90h9M249.30 191.40v9M244.80 393.10h9M249.30 388.60v9M722.80 195.90h9M727.30 191.40v9M722.80 393.10h9M727.30 388.60v9"/>
<!-- timeline in top pill -->
<rect x="147" y="19" width="688" height="1.3" fill="#9a9a9a"/>
<rect x="146.5" y="14" width="1.3" height="11" fill="#9a9a9a"/>
<rect x="833.5" y="14" width="1.3" height="11" fill="#9a9a9a"/>
<rect x="490" y="16" width="1.3" height="7" fill="#e0a000"/>
<path d="M409.8 9.5h4.4v3h-1.2v3h-2v-3h-1.2z" fill="#e000e0"/>
<!-- A icon -->
<defs>
<linearGradient id="ag" x1="0" y1="0" x2="0" y2="1"><stop offset="0" stop-color="#a4e03a"/><stop offset="1" stop-color="#8cd020"/></linearGradient>
</defs>
<path fill="#8fd42a" d="M886.5 31L895 7H901.5L910.5 30H903.5L902 25H894.5L893 31Z"/>
<path fill="#5f9a18" d="M897 19.3L899.4 11.5L901.6 19.3Z"/>
<path fill="#b8ee48" d="M886.5 31L895 7H898.4L890.2 31Z"/>
<path fill="#6aa818" d="M901.5 7L910.5 30L909 31L900.3 9.5Z"/>
<path fill="#7cc020" d="M894.5 25H902L901.3 22.5H895.3Z"/>
<path d="M897.6 8.6L890.6 29.6" stroke="#f2ffd8" stroke-width="1" fill="none"/>
<!-- play -->
<path d="M922 9.3q-0.6 0-0.6 0.8v19.2q0 0.9 0.8 0.4l16.4-9.4q0.8-0.5 0-1l-16.2-9.6z" fill="url(#ag)"/>
<!-- lightning -->
<path d="M956.6 10.2h9.2l-4.2 7.4h3.4l-10.2 11.4l3.8-8h-4.6z" fill="#9ad82a"/>
<path d="M956.6 10.2h9.2l-1 1.8h-8.7z" fill="#c0f060"/>
<!-- trigger position marker -->
<path d="M375 38.6h9.5l-4.75 8.2z" fill="#ff0000"/>
<!-- trigger level marker -->
<path d="M974 328.8v10l-7.3-5z" fill="#ff0000"/>
<rect x="10" y="221" width="89" height="3" fill="#ff0000"/>
<path d="M10.5 224v2M11.5 224v2M12.5 224v9M13.5 224v9M14.5 224v2M17.5 224v7M18.5 224v2M19.5 224v2M22.5 224v3M23.5 224v2M25.5 224v5M26.5 224v6M27.5 224v2M28.5 224v3M31.5 224v9M32.5 224v4M33.5 224v1M34.5 224v4M35.5 224v6M36.5 224v2M37.5 224v8M41.5 224v5M42.5 224v6M44.5 224v3M45.5 224v3M47.5 224v2M48.5 224v2M50.5 224v5M52.5 224v3M53.5 224v3M54.5 224v2M55.5 224v5M57.5 224v2M58.5 224v1M63.5 224v9M64.5 224v2M65.5 224v2M66.5 224v1M67.5 224v4M68.5 224v3M69.5 224v3M71.5 224v2M73.5 224v6M74.5 224v4M75.5 224v2M76.5 224v4M77.5 224v1M78.5 224v2M79.5 224v4M80.5 224v3M82.5 224v3M85.5 224v3M87.5 224v6M88.5 224v1M89.5 224v3M91.5 224v6M92.5 224v3M93.5 224v10M95.5 224v4M97.5 224v11M98.5 224v7" stroke="#ff0000" stroke-width="1"/>
<line x1="98.5" y1="221" x2="98.5" y2="444" stroke="#ff0000" stroke-width="1.15"/>
<line x1="101" y1="213" x2="101" y2="444" stroke="#ff0000" stroke-width="1.15"/>
<rect x="101" y="221" width="12" height="3" fill="#ff0000"/>
<path d="M101.5 224v5M103.5 224v2M104.5 224v2M105.5 224v2M107.5 224v4M108.5 224v6M109.5 224v2M112.5 224v3" stroke="#ff0000" stroke-width="1"/>
<line x1="112.6" y1="221" x2="112.6" y2="442" stroke="#ff0000" stroke-width="1.15"/>
<line x1="113.3" y1="436" x2="113.3" y2="442" stroke="#ff0000" stroke-width="1.4"/>
<rect x="113" y="442" width="53" height="3" fill="#ff0000"/>
<path d="M113.5 445v4M114.5 445v7M118.5 445v4M119.5 445v8M123.5 445v2M126.5 445v4M127.5 445v1M128.5 445v2M130.5 445v5M131.5 445v4M133.5 445v2M134.5 445v3M135.5 445v4M137.5 445v4M138.5 445v3M139.5 445v3M141.5 445v2M144.5 445v5M145.5 445v2M147.5 445v1M148.5 445v5M149.5 445v3M150.5 445v3M151.5 445v5M152.5 445v3M153.5 445v2M154.5 445v6M156.5 445v2M158.5 445v2M162.5 445v4M165.5 445v1M113.5 442v-6M114.5 442v-5M115.5 442v-4M116.5 442v-3M117.5 442v-2M118.5 442v-1" stroke="#ff0000" stroke-width="1"/>
<line x1="165.9" y1="213" x2="165.9" y2="444" stroke="#ff0000" stroke-width="1.15"/>
<rect x="166" y="221" width="9" height="3" fill="#ff0000"/>
<path d="M166.5 224v2M167.5 224v2M168.5 224v6M169.5 224v4M170.5 224v3M171.5 224v3M173.5 224v2M174.5 224v3" stroke="#ff0000" stroke-width="1"/>
<line x1="174.6" y1="221" x2="174.6" y2="444" stroke="#ff0000" stroke-width="1.15"/>
<rect x="175" y="442" width="11" height="3" fill="#ff0000"/>
<path d="M175.5 445v3M176.5 445v2M178.5 445v1M180.5 445v3M181.5 445v5M182.5 445v3M185.5 445v2" stroke="#ff0000" stroke-width="1"/>
<line x1="185.3" y1="215" x2="185.3" y2="444" stroke="#ff0000" stroke-width="1.15"/>
<rect x="186" y="221" width="88" height="3" fill="#ff0000"/>
<path d="M186.5 224v2M187.5 224v1M188.5 224v3M189.5 224v5M191.5 224v3M192.5 224v2M193.5 224v3M194.5 224v4M196.5 224v4M197.5 224v2M198.5 224v3M200.5 224v2M202.5 224v3M203.5 224v2M206.5 224v4M207.5 224v3M209.5 224v5M211.5 224v1M216.5 224v8M218.5 224v6M222.5 224v1M223.5 224v2M224.5 224v6M225.5 224v3M227.5 224v6M228.5 224v6M229.5 224v1M231.5 224v2M235.5 224v8M237.5 224v3M238.5 224v3M239.5 224v2M240.5 224v3M242.5 224v10M244.5 224v3M247.5 224v2M248.5 224v4M250.5 224v2M251.5 224v6M252.5 224v6M253.5 224v2M254.5 224v2M255.5 224v4M256.5 224v3M258.5 224v9M261.5 224v5M263.5 224v1M264.5 224v2M265.5 224v4M266.5 224v11M268.5 224v3M270.5 224v4M271.5 224v5M272.5 224v8" stroke="#ff0000" stroke-width="1"/>
<rect x="286" y="223" width="5" height="221" fill="#8a0000"/>
<rect x="316" y="223" width="6" height="221" fill="#8a0000"/>
<line x1="273.6" y1="221" x2="273.6" y2="444" stroke="#ff0000" stroke-width="1.15"/>
<line x1="276.1" y1="213" x2="276.1" y2="447" stroke="#ff0000" stroke-width="1.3"/>
<rect x="276.1" y="227" width="2" height="2" fill="#ff0000"/>
<rect x="274.6" y="440" width="1.5" height="5" fill="#ff0000"/>
<rect x="276.1" y="442" width="3.2999999999999545" height="2" fill="#ff0000"/>
<line x1="279.4" y1="213" x2="279.4" y2="449" stroke="#ff0000" stroke-width="1.3"/>
<rect x="279.4" y="221" width="1" height="2" fill="#ff0000"/>
<rect x="277.9" y="440" width="1.5" height="5" fill="#ff0000"/>
<rect x="279.4" y="442" width="3.900000000000034" height="2" fill="#ff0000"/>
<line x1="283.3" y1="213" x2="283.3" y2="449" stroke="#ff0000" stroke-width="1.3"/>
<rect x="283.3" y="229" width="1" height="2" fill="#ff0000"/>
<rect x="281.8" y="434" width="1.5" height="5" fill="#ff0000"/>
<line x1="287.3" y1="215" x2="287.3" y2="449" stroke="#ff0000" stroke-width="1.3"/>
<rect x="287.3" y="227" width="1" height="2" fill="#ff0000"/>
<rect x="285.8" y="440" width="1.5" height="5" fill="#ff0000"/>
<rect x="287.3" y="442" width="2.5" height="2" fill="#ff0000"/>
<line x1="289.8" y1="213" x2="289.8" y2="445" stroke="#ff0000" stroke-width="1.3"/>
<rect x="289.8" y="225" width="2" height="2" fill="#ff0000"/>
<rect x="288.3" y="442" width="1.5" height="5" fill="#ff0000"/>
<rect x="289.8" y="442" width="4.0" height="2" fill="#ff0000"/>
<line x1="293.8" y1="213" x2="293.8" y2="447" stroke="#ff0000" stroke-width="1.3"/>
<rect x="293.8" y="225" width="2" height="2" fill="#ff0000"/>
<rect x="292.3" y="440" width="1.5" height="5" fill="#ff0000"/>
<line x1="296.6" y1="213" x2="296.6" y2="449" stroke="#ff0000" stroke-width="1.3"/>
<rect x="296.6" y="227" width="1.5" height="2" fill="#ff0000"/>
<rect x="295.1" y="440" width="1.5" height="5" fill="#ff0000"/>
<rect x="296.6" y="442" width="3.599999999999966" height="2" fill="#ff0000"/>
<line x1="300.2" y1="209" x2="300.2" y2="447" stroke="#ff0000" stroke-width="1.3"/>
<rect x="300.2" y="221" width="1.5" height="2" fill="#ff0000"/>
<rect x="298.7" y="438" width="1.5" height="5" fill="#ff0000"/>
<rect x="300.2" y="442" width="3.6000000000000227" height="2" fill="#ff0000"/>
<line x1="303.8" y1="213" x2="303.8" y2="447" stroke="#ff0000" stroke-width="1.3"/>
<rect x="303.8" y="223" width="2" height="2" fill="#ff0000"/>
<rect x="302.3" y="440" width="1.5" height="5" fill="#ff0000"/>
<rect x="303.8" y="442" width="4.300000000000011" height="2" fill="#ff0000"/>
<line x1="308.1" y1="213" x2="308.1" y2="445" stroke="#ff0000" stroke-width="1.3"/>
<rect x="308.1" y="227" width="1.5" height="2" fill="#ff0000"/>
<rect x="306.6" y="434" width="1.5" height="5" fill="#ff0000"/>
<rect x="308.1" y="442" width="4.0" height="2" fill="#ff0000"/>
<line x1="312.1" y1="213" x2="312.1" y2="447" stroke="#ff0000" stroke-width="1.3"/>
<rect x="312.1" y="221" width="1" height="2" fill="#ff0000"/>
<rect x="310.6" y="442" width="1.5" height="5" fill="#ff0000"/>
<rect x="312.1" y="442" width="3.1999999999999886" height="2" fill="#ff0000"/>
<line x1="315.3" y1="213" x2="315.3" y2="449" stroke="#ff0000" stroke-width="1.3"/>
<rect x="315.3" y="229" width="1.5" height="2" fill="#ff0000"/>
<rect x="313.8" y="442" width="1.5" height="5" fill="#ff0000"/>
<rect x="315.3" y="442" width="4.300000000000011" height="2" fill="#ff0000"/>
<line x1="319.6" y1="213" x2="319.6" y2="449" stroke="#ff0000" stroke-width="1.3"/>
<rect x="319.6" y="227" width="1" height="2" fill="#ff0000"/>
<rect x="318.1" y="442" width="1.5" height="5" fill="#ff0000"/>
<rect x="319.6" y="442" width="3.2999999999999545" height="2" fill="#ff0000"/>
<line x1="322.9" y1="213" x2="322.9" y2="445" stroke="#ff0000" stroke-width="1.3"/>
<rect x="322.9" y="229" width="2" height="2" fill="#ff0000"/>
<rect x="321.4" y="442" width="1.5" height="5" fill="#ff0000"/>
<line x1="323.5" y1="213" x2="323.5" y2="449" stroke="#ff0000" stroke-width="1.3"/>
<rect x="323.5" y="221" width="2" height="2" fill="#ff0000"/>
<rect x="322.0" y="442" width="1.5" height="5" fill="#ff0000"/>
<rect x="323" y="221" width="55" height="3" fill="#ff0000"/>
<path d="M323.5 224v2M326.5 224v2M327.5 224v5M328.5 224v2M330.5 224v3M332.5 224v3M333.5 224v4M335.5 224v3M336.5 224v5M337.5 224v1M340.5 224v3M342.5 224v1M344.5 224v5M347.5 224v3M348.5 224v3M349.5 224v10M350.5 224v2M351.5 224v1M352.5 224v6M354.5 224v1M355.5 224v6M360.5 224v2M361.5 224v9M364.5 224v8M365.5 224v5M366.5 224v3M368.5 224v9M369.5 224v6M370.5 224v10M373.5 224v7M375.5 224v4M376.5 224v8M377.5 224v6" stroke="#ff0000" stroke-width="1"/>
<line x1="377.9" y1="221" x2="377.9" y2="530" stroke="#ff0000" stroke-width="1.15"/>
<path d="M380.2 219.4H383L380.6 535H377.8Z" fill="#8c0000"/>
<line x1="378.8" y1="522" x2="378.8" y2="535" stroke="#ff0000" stroke-width="1.4"/>
<rect x="380.5" y="223.5" width="3" height="2.5" fill="#ff0000"/>
<line x1="383.7" y1="224" x2="383.7" y2="436" stroke="#ff0000" stroke-width="1.5"/>
<rect x="384" y="438" width="22" height="3" fill="#ff0000"/>
<path d="M384.5 441v4M387.5 441v8M389.5 441v2M391.5 441v3M397.5 441v2M400.5 441v3M401.5 441v1M402.5 441v4" stroke="#ff0000" stroke-width="1"/>
<line x1="405.2" y1="217" x2="405.2" y2="441" stroke="#ff0000" stroke-width="1.15"/>
<rect x="405" y="221" width="22" height="3" fill="#ff0000"/>
<path d="M405.5 224v2M406.5 224v6M407.5 224v6M412.5 224v3M414.5 224v3M415.5 224v3M416.5 224v3M417.5 224v3M418.5 224v2M420.5 224v6M421.5 224v6M422.5 224v3M423.5 224v3M424.5 224v2M425.5 224v10" stroke="#ff0000" stroke-width="1"/>
<line x1="426.4" y1="221" x2="426.4" y2="438" stroke="#ff0000" stroke-width="1.2"/>
<line x1="428.1" y1="211" x2="428.1" y2="438" stroke="#ff0000" stroke-width="1.2"/>
<rect x="428" y="221" width="19" height="3" fill="#ff0000"/>
<path d="M428.5 224v1M429.5 224v3M430.5 224v3M432.5 224v4M433.5 224v9M434.5 224v2M437.5 224v2M438.5 224v3M439.5 224v3M440.5 224v4M443.5 224v6M444.5 224v2M445.5 224v4M446.5 224v2" stroke="#ff0000" stroke-width="1"/>
<line x1="446.5" y1="221" x2="446.5" y2="440" stroke="#ff0000" stroke-width="1.15"/>
<rect x="446" y="439" width="8" height="3" fill="#ff0000"/>
<path d="M449.5 442v4M451.5 442v2M452.5 442v8" stroke="#ff0000" stroke-width="1"/>
<line x1="453.7" y1="217" x2="453.7" y2="442" stroke="#ff0000" stroke-width="1.15"/>
<rect x="454" y="221" width="117" height="3" fill="#ff0000"/>
<path d="M456.5 224v1M457.5 224v1M459.5 224v2M463.5 224v6M464.5 224v5M465.5 224v4M466.5 224v10M470.5 224v5M473.5 224v5M474.5 224v5M475.5 224v6M476.5 224v6M477.5 224v6M479.5 224v2M480.5 224v2M481.5 224v7M482.5 224v4M483.5 224v1M487.5 224v2M490.5 224v6M495.5 224v4M496.5 224v4M497.5 224v6M498.5 224v6M499.5 224v3M500.5 224v2M502.5 224v4M503.5 224v10M504.5 224v4M505.5 224v2M506.5 224v5M507.5 224v5M509.5 224v2M510.5 224v1M511.5 224v3M515.5 224v1M516.5 224v3M517.5 224v4M518.5 224v3M519.5 224v8M520.5 224v4M521.5 224v3M522.5 224v6M523.5 224v3M524.5 224v2M527.5 224v3M528.5 224v4M531.5 224v6M533.5 224v1M534.5 224v1M535.5 224v3M536.5 224v5M537.5 224v6M540.5 224v1M541.5 224v9M542.5 224v2M544.5 224v3M545.5 224v5M548.5 224v10M549.5 224v3M551.5 224v2M552.5 224v5M553.5 224v6M554.5 224v1M555.5 224v3M556.5 224v3M559.5 224v6M561.5 224v2M562.5 224v2M566.5 224v4M568.5 224v2" stroke="#ff0000" stroke-width="1"/>
<line x1="570.7" y1="221" x2="570.7" y2="444" stroke="#ff0000" stroke-width="1.15"/>
<rect x="571" y="442" width="43" height="3" fill="#ff0000"/>
<path d="M571.5 445v2M572.5 445v1M575.5 445v5M576.5 445v6M577.5 445v2M578.5 445v2M579.5 445v2M582.5 445v2M583.5 445v5M584.5 445v6M588.5 445v6M589.5 445v8M590.5 445v5M591.5 445v3M593.5 445v4M594.5 445v2M595.5 445v5M596.5 445v5M597.5 445v2M598.5 445v3M600.5 445v6M601.5 445v3M602.5 445v3M605.5 445v4M608.5 445v2M610.5 445v4M611.5 445v3M612.5 445v2M613.5 445v5M571.5 442v-4M572.5 442v-3M573.5 442v-2M574.5 442v-1" stroke="#ff0000" stroke-width="1"/>
<line x1="613.5" y1="219" x2="613.5" y2="444" stroke="#ff0000" stroke-width="1.15"/>
<rect x="614" y="221" width="17" height="3" fill="#ff0000"/>
<path d="M614.5 224v3M621.5 224v3M622.5 224v2M624.5 224v2M627.5 224v6M628.5 224v5M629.5 224v5M630.5 224v3" stroke="#ff0000" stroke-width="1"/>
<line x1="630.5" y1="221" x2="630.5" y2="444" stroke="#ff0000" stroke-width="1.15"/>
<rect x="631" y="442" width="15" height="3" fill="#ff0000"/>
<path d="M631.5 445v4M632.5 445v2M633.5 445v4M641.5 445v2M642.5 445v2M645.5 445v3M631.5 442v-4M632.5 442v-3M633.5 442v-2M634.5 442v-1" stroke="#ff0000" stroke-width="1"/>
<line x1="644.7" y1="217" x2="644.7" y2="444" stroke="#ff0000" stroke-width="1.15"/>
<rect x="645" y="221" width="86" height="3" fill="#ff0000"/>
<path d="M646.5 224v5M647.5 224v5M651.5 224v1M652.5 224v10M653.5 224v3M654.5 224v6M656.5 224v4M657.5 224v6M659.5 224v2M662.5 224v5M663.5 224v5M667.5 224v3M669.5 224v3M671.5 224v2M675.5 224v3M676.5 224v5M677.5 224v2M678.5 224v3M679.5 224v3M681.5 224v3M683.5 224v6M686.5 224v3M687.5 224v4M688.5 224v4M689.5 224v1M690.5 224v3M691.5 224v2M692.5 224v6M693.5 224v5M694.5 224v2M698.5 224v3M700.5 224v2M701.5 224v3M702.5 224v1M705.5 224v2M707.5 224v4M711.5 224v5M713.5 224v4M714.5 224v1M716.5 224v2M717.5 224v9M719.5 224v4M723.5 224v4M726.5 224v6M727.5 224v3M728.5 224v3M730.5 224v4" stroke="#ff0000" stroke-width="1"/>
<rect x="747" y="223" width="5" height="221" fill="#8a0000"/>
<rect x="771" y="223" width="5" height="221" fill="#8a0000"/>
<line x1="730.6" y1="221" x2="730.6" y2="444" stroke="#ff0000" stroke-width="1.15"/>
<line x1="733.1" y1="213.3" x2="733.1" y2="445" stroke="#ff0000" stroke-width="1.3"/>
<rect x="733.1" y="229" width="2" height="2" fill="#ff0000"/>
<rect x="731.6" y="442" width="1.5" height="5" fill="#ff0000"/>
<line x1="737.1" y1="217.2" x2="737.1" y2="445" stroke="#ff0000" stroke-width="1.3"/>
<rect x="737.1" y="227" width="2" height="2" fill="#ff0000"/>
<rect x="735.6" y="434" width="1.5" height="5" fill="#ff0000"/>
<rect x="737.1" y="442" width="3.8999999999999773" height="2" fill="#ff0000"/>
<line x1="741" y1="215.1" x2="741" y2="445" stroke="#ff0000" stroke-width="1.3"/>
<rect x="741" y="227" width="1.5" height="2" fill="#ff0000"/>
<rect x="739.5" y="442" width="1.5" height="5" fill="#ff0000"/>
<rect x="741" y="442" width="2.8999999999999773" height="2" fill="#ff0000"/>
<line x1="743.9" y1="213.3" x2="743.9" y2="445" stroke="#ff0000" stroke-width="1.3"/>
<rect x="743.9" y="227" width="2" height="2" fill="#ff0000"/>
<rect x="742.4" y="442" width="1.5" height="5" fill="#ff0000"/>
<line x1="746.8" y1="211.1" x2="746.8" y2="449" stroke="#ff0000" stroke-width="1.3"/>
<rect x="746.8" y="229" width="1" height="2" fill="#ff0000"/>
<rect x="745.3" y="442" width="1.5" height="5" fill="#ff0000"/>
<rect x="746.8" y="442" width="3.900000000000091" height="2" fill="#ff0000"/>
<line x1="750.7" y1="213.3" x2="750.7" y2="449" stroke="#ff0000" stroke-width="1.3"/>
<rect x="750.7" y="223" width="1" height="2" fill="#ff0000"/>
<rect x="749.2" y="440" width="1.5" height="5" fill="#ff0000"/>
<line x1="752.9" y1="211.1" x2="752.9" y2="449" stroke="#ff0000" stroke-width="1.3"/>
<rect x="752.9" y="221" width="2" height="2" fill="#ff0000"/>
<rect x="751.4" y="442" width="1.5" height="5" fill="#ff0000"/>
<rect x="752.9" y="442" width="5.0" height="2" fill="#ff0000"/>
<line x1="757.9" y1="217.2" x2="757.9" y2="445" stroke="#ff0000" stroke-width="1.3"/>
<rect x="757.9" y="225" width="2" height="2" fill="#ff0000"/>
<rect x="756.4" y="438" width="1.5" height="5" fill="#ff0000"/>
<line x1="760.5" y1="213.3" x2="760.5" y2="445" stroke="#ff0000" stroke-width="1.3"/>
<rect x="760.5" y="227" width="1" height="2" fill="#ff0000"/>
<rect x="759.0" y="438" width="1.5" height="5" fill="#ff0000"/>
<rect x="760.5" y="442" width="4.7999999999999545" height="2" fill="#ff0000"/>
<line x1="765.3" y1="209.3" x2="765.3" y2="445" stroke="#ff0000" stroke-width="1.3"/>
<rect x="765.3" y="227" width="2" height="2" fill="#ff0000"/>
<rect x="763.8" y="442" width="1.5" height="5" fill="#ff0000"/>
<line x1="769.1" y1="211.1" x2="769.1" y2="449" stroke="#ff0000" stroke-width="1.3"/>
<rect x="769.1" y="229" width="2" height="2" fill="#ff0000"/>
<rect x="767.6" y="434" width="1.5" height="5" fill="#ff0000"/>
<rect x="769.1" y="442" width="2.1000000000000227" height="2" fill="#ff0000"/>
<line x1="771.2" y1="211.1" x2="771.2" y2="445" stroke="#ff0000" stroke-width="1.3"/>
<rect x="771.2" y="227" width="2" height="2" fill="#ff0000"/>
<rect x="769.7" y="440" width="1.5" height="5" fill="#ff0000"/>
<rect x="771.2" y="442" width="4.2999999999999545" height="2" fill="#ff0000"/>
<line x1="775.5" y1="215.1" x2="775.5" y2="449" stroke="#ff0000" stroke-width="1.3"/>
<rect x="775.5" y="229" width="1" height="2" fill="#ff0000"/>
<rect x="774.0" y="442" width="1.5" height="5" fill="#ff0000"/>
<line x1="779.9" y1="211.1" x2="779.9" y2="445" stroke="#ff0000" stroke-width="1.3"/>
<rect x="779.9" y="223" width="2" height="2" fill="#ff0000"/>
<rect x="778.4" y="442" width="1.5" height="5" fill="#ff0000"/>
<rect x="780" y="221" width="64" height="3" fill="#ff0000"/>
<path d="M780.5 224v1M781.5 224v2M782.5 224v10M783.5 224v2M784.5 224v2M785.5 224v6M787.5 224v1M788.5 224v1M791.5 224v3M792.5 224v6M793.5 224v6M794.5 224v2M797.5 224v5M798.5 224v3M800.5 224v1M806.5 224v2M807.5 224v5M808.5 224v5M812.5 224v1M813.5 224v2M816.5 224v2M819.5 224v6M820.5 224v6M821.5 224v3M822.5 224v5M823.5 224v3M824.5 224v5M825.5 224v4M826.5 224v3M827.5 224v6M828.5 224v3M829.5 224v3M831.5 224v2M833.5 224v2M834.5 224v2M836.5 224v13M838.5 224v9M839.5 224v8M842.5 224v2M843.5 224v12" stroke="#ff0000" stroke-width="1"/>
<line x1="843.5" y1="221" x2="843.5" y2="535" stroke="#ff0000" stroke-width="1.5"/>
<line x1="846.1" y1="219" x2="846.1" y2="535" stroke="#ff0000" stroke-width="1.5"/>
<rect x="843" y="530" width="3.5" height="5" fill="#ff0000"/>
<rect x="846" y="223" width="2.5" height="2.5" fill="#ff0000"/>
<line x1="848.5" y1="224" x2="848.5" y2="426" stroke="#ff0000" stroke-width="1.5"/>
<line x1="849.3" y1="425" x2="849.3" y2="438" stroke="#ff0000" stroke-width="1.3"/>
<rect x="849" y="438" width="22" height="3" fill="#ff0000"/>
<path d="M850.5 441v1M854.5 441v2M858.5 441v3M859.5 441v2M860.5 441v1M862.5 441v4M864.5 441v4M867.5 441v2M868.5 441v2M869.5 441v4M849.5 438v-6M850.5 438v-5M851.5 438v-4M852.5 438v-3M853.5 438v-2M854.5 438v-1" stroke="#ff0000" stroke-width="1"/>
<line x1="870.9" y1="215" x2="870.9" y2="441" stroke="#ff0000" stroke-width="1.15"/>
<rect x="871" y="221" width="22" height="3" fill="#ff0000"/>
<path d="M871.5 224v4M872.5 224v6M873.5 224v2M875.5 224v3M876.5 224v10M879.5 224v6M881.5 224v1M882.5 224v4M883.5 224v2M884.5 224v3M885.5 224v6M886.5 224v2M887.5 224v10M889.5 224v2M890.5 224v6M891.5 224v1" stroke="#ff0000" stroke-width="1"/>
<line x1="892.4" y1="221" x2="892.4" y2="438" stroke="#ff0000" stroke-width="1.15"/>
<line x1="894.6" y1="217" x2="894.6" y2="438" stroke="#ff0000" stroke-width="1.15"/>
<rect x="895" y="221" width="19" height="3" fill="#ff0000"/>
<path d="M898.5 224v3M899.5 224v3M901.5 224v3M902.5 224v3M904.5 224v4M905.5 224v3M906.5 224v5M908.5 224v2M909.5 224v2M910.5 224v2M913.5 224v2" stroke="#ff0000" stroke-width="1"/>
<line x1="913.6" y1="221" x2="913.6" y2="440" stroke="#ff0000" stroke-width="1.15"/>
<line x1="917.2" y1="211" x2="917.2" y2="440" stroke="#ff0000" stroke-width="1.15"/>
<rect x="917" y="221" width="23" height="3" fill="#ff0000"/>
<path d="M920.5 224v2M921.5 224v1M922.5 224v3M924.5 224v1M926.5 224v3M929.5 224v4M931.5 224v6M932.5 224v4M935.5 224v5M937.5 224v2M938.5 224v1M939.5 224v1" stroke="#ff0000" stroke-width="1"/>
<line x1="939.7" y1="221" x2="939.7" y2="441" stroke="#ff0000" stroke-width="1.15"/>
<rect x="940" y="440" width="8" height="3" fill="#ff0000"/>
<path d="M940.5 443v4M941.5 443v2M943.5 443v5M944.5 443v4M945.5 443v2M946.5 443v1M947.5 443v1" stroke="#ff0000" stroke-width="1"/>
<line x1="947.3" y1="217" x2="947.3" y2="442" stroke="#ff0000" stroke-width="1.15"/>
<rect x="948" y="221" width="18" height="3" fill="#ff0000"/>
<path d="M950.5 224v2M951.5 224v3M952.5 224v6M953.5 224v1M954.5 224v5M956.5 224v1M957.5 224v3M962.5 224v5M963.5 224v2M965.5 224v5" stroke="#ff0000" stroke-width="1"/>
<rect x="98.0" y="440" width="3.5" height="3" fill="#ff0000"/>
<rect x="99.0" y="436" width="1" height="8" fill="#ff0000"/>
<rect x="425.9" y="436" width="2.7000000000000455" height="3" fill="#ff0000"/>
<rect x="426.9" y="432" width="1" height="8" fill="#ff0000"/>
<rect x="891.9" y="436" width="3.2000000000000455" height="3" fill="#ff0000"/>
<rect x="892.9" y="432" width="1" height="8" fill="#ff0000"/>
<rect x="913.1" y="438" width="4.600000000000023" height="3" fill="#ff0000"/>
<rect x="914.1" y="434" width="1" height="8" fill="#ff0000"/>
<!-- ch1 marker -->
<path d="M0 523.8h5.5l4.2 17.2h-9.7" fill="none" stroke="#ff1010" stroke-width="1.6"/>
<path d="M1.2 532.2l3-2.5v8.5" fill="none" stroke="#ff1010" stroke-width="1.3"/>
<rect x="10.3" y="525.4" width="13.5" height="14.2" rx="3" fill="#f7eedf"/>
<path d="M15.3 529.6l5 3l-5 3z" fill="#8a7a98"/>
</svg>

<!-- channel 1 panel -->
<div class="abs p1"></div>
<div class="abs p2"></div>
<svg width="974" height="720" viewBox="0 0 974 720">
<defs>
<linearGradient id="rg" x1="0" y1="0" x2="0" y2="1"><stop offset="0" stop-color="#f49a88"/><stop offset="0.3" stop-color="#e6402e"/><stop offset="0.6" stop-color="#d92a1c"/><stop offset="1" stop-color="#f0806a"/></linearGradient>
</defs>
<circle cx="13.9" cy="652.5" r="10.2" fill="url(#rg)"/>
<ellipse cx="16" cy="646.5" rx="4" ry="2.3" fill="#fff" opacity="0.45"/>
<path d="M13.9 645.5h1.8v12.1h-1.8v-8.6h-3.1v-1.6h3.1z" fill="#000"/>
<circle cx="135.1" cy="650.8" r="9.8" fill="none" stroke="#787878" stroke-width="1.3"/>
<text x="135.1" y="655.8" font-family="Liberation Sans" font-size="14" text-anchor="middle" fill="#8a8a8a">2</text>
</svg>
<div class="t w" style="left:4px;top:668px;">DC</div>
<div class="t w" style="left:38px;top:668px;">500 mV /div</div>
<div class="t w" style="left:38px;top:684px;">-5.16divs</div>
<div class="t w" style="left:38px;top:699px;">857.347 Hz</div>
<div class="t gr" style="left:125.5px;top:668.5px;">DC</div>
<div class="t gr" style="left:159.5px;top:668.5px;">2 V /div</div>
<div class="t gr" style="left:159.5px;top:684px;">-4.0divs</div>
<div class="t gr" style="left:159.5px;top:699px;">?</div>

<!-- toolbar -->
<svg width="974" height="720" viewBox="0 0 974 720">
<defs>
<linearGradient id="tg" x1="0" y1="0" x2="0" y2="1"><stop offset="0" stop-color="#5c5c5e"/><stop offset="0.5" stop-color="#3a3a3c"/><stop offset="1" stop-color="#1c1c1e"/></linearGradient>
<linearGradient id="hg" x1="0" y1="0" x2="0" y2="1"><stop offset="0" stop-color="#8a8a8c"/><stop offset="0.55" stop-color="#505052"/><stop offset="1" stop-color="#2a2a2c"/></linearGradient>
</defs>
<path d="M839 588h112v30h-112a15 15 0 0 1 0-30z" fill="url(#tg)"/>
<rect x="857.5" y="589" width="1.5" height="29" fill="#151516"/>
<rect x="893.8" y="589" width="1.5" height="29" fill="#151516"/>
<circle cx="952.8" cy="597.2" r="20.6" fill="url(#hg)"/>
<!-- refresh-home -->
<path d="M848.5 595.2 A10.3 10.3 0 1 0 852.6 609.5" fill="none" stroke="#eeeeee" stroke-width="2.3"/>
<path d="M847 609.5l6.8-2.5l-1.2 7.5z" fill="#eeeeee"/>
<path d="M836.8 601.2l5.6-5.6l5.6 5.6M838.2 600v6.4h8.4v-6.4" fill="none" stroke="#eeeeee" stroke-width="1.3"/>
<rect x="841.2" y="602.5" width="2.4" height="3.9" fill="none" stroke="#dddddd" stroke-width="0.9"/>
<!-- floppy -->
<path d="M867.2 594h16.5l3.2 3.2v16.8h-19.7z" fill="#efefef"/>
<rect x="871.8" y="595.4" width="11.6" height="4.6" fill="#3a3a3a"/>
<rect x="880.4" y="596" width="1.8" height="3.4" fill="#efefef"/>
<rect x="869.6" y="601.6" width="15" height="10.6" fill="#1e2530"/>
<rect x="870.6" y="603.4" width="13" height="1.2" fill="#7d90a8"/>
<rect x="870.6" y="606.3" width="13" height="1.2" fill="#7d90a8"/>
<rect x="870.6" y="609.2" width="13" height="1.2" fill="#7d90a8"/>
<!-- swap windows -->
<rect x="901.8" y="602.4" width="10" height="10" fill="#1e1e1e" stroke="#d8d8d8" stroke-width="1.4"/>
<rect x="914.5" y="593.7" width="6" height="4.8" fill="none" stroke="#d8d8d8" stroke-width="1.2"/>
<rect x="918.3" y="596.7" width="6.3" height="5" fill="#2a2a2a" stroke="#d8d8d8" stroke-width="1.2"/>
<path d="M904.6 599.5q2.5-3.5 6-3.5" fill="none" stroke="#e0e0e0" stroke-width="1.6"/>
<path d="M909.5 593.5l3.3 2.5l-3.6 2.4z" fill="#e0e0e0"/>
<path d="M921.5 604.4q-2 3-6 3" fill="none" stroke="#e0e0e0" stroke-width="1.6"/>
<path d="M916 604.6l-2.5 2.8l3 2.5z" fill="#e0e0e0"/>
<!-- home -->
<path d="M939.6 596.4l13-12.6l13.1 12.6" fill="none" stroke="#f2f2f2" stroke-width="2.6"/>
<rect x="958.5" y="584.2" width="2.6" height="6.5" fill="#f2f2f2"/>
<path d="M942.1 598.3l10.5-9.8l11 9.8v11.2h-7.6v-9.3h-6.4v9.3h-7.5z" fill="#f2f2f2"/>
<circle cx="952.6" cy="594" r="1.7" fill="#5a5a5a"/>
</svg>

<!-- timebase panel -->
<div class="abs tb">
 <div class="row" style="top:1px;"></div>
 <div class="row" style="top:25px;"></div>
 <div class="row" style="top:50px;"></div>
 <div class="row" style="top:74px;"></div>
</div>
<div class="t w" style="left:738px;top:628px;">M</div>
<div class="t w" style="left:772px;top:628px;">2ms /div</div>
<div class="t w" style="left:738.5px;top:652px;">T</div>
<div class="t w" style="left:769.5px;top:652px;">4.520 ms</div>
<div class="t w" style="left:738px;top:676px;">D</div>
<div class="t w" style="left:771px;top:676px;">5k</div>
<div class="t w" style="left:738px;top:700px;">S</div>
<div class="t w" style="left:769.5px;top:700px;">(125KS/s)</div>

<!-- trigger panel -->
<div class="abs trig">
 <div class="btn" style="left:3px;width:54px;"></div>
 <div class="btn" style="left:77px;width:43px;"></div>
</div>
<div class="btxt" style="left:855px;top:623px;">Trigger</div>
<div class="btxt" style="left:928px;top:623px;">Force</div>
<svg width="974" height="720" viewBox="0 0 974 720">
<circle cx="862.5" cy="655.5" r="7.6" fill="url(#rg)"/>
<path d="M862.2 650.5h2.4v9.3h-2.4v-6.6l-2.1 1.1v-2z" fill="#000"/>
<path d="M879.1 662.4H885.2L893.8 648.6H899.6" fill="none" stroke="#f0f0f0" stroke-width="1.4"/>
<path d="M890.8 653.2L885.2 656.4L888.2 657.1L889.6 659.8Z" fill="#f4f4f4"/>
</svg>
<div class="t w" style="left:907px;top:648px;">2.180 V</div>
<svg width="974" height="720" viewBox="0 0 974 720" style="z-index:0">
<rect x="0" y="718" width="974" height="2" fill="#2e2e30"/>
<rect x="0" y="718" width="28" height="2" fill="#9a9a9c"/>
<rect x="28" y="718" width="5" height="2" fill="#000"/>
<rect x="33" y="718.5" width="10" height="1.5" fill="#c02020"/>
<rect x="45" y="718.5" width="8" height="1.5" fill="#c02020"/>
<rect x="269" y="717" width="1" height="3" fill="#c8c800"/>
<rect x="886" y="718.5" width="13" height="1.5" fill="#c02020"/>
</svg>
</body></html>
